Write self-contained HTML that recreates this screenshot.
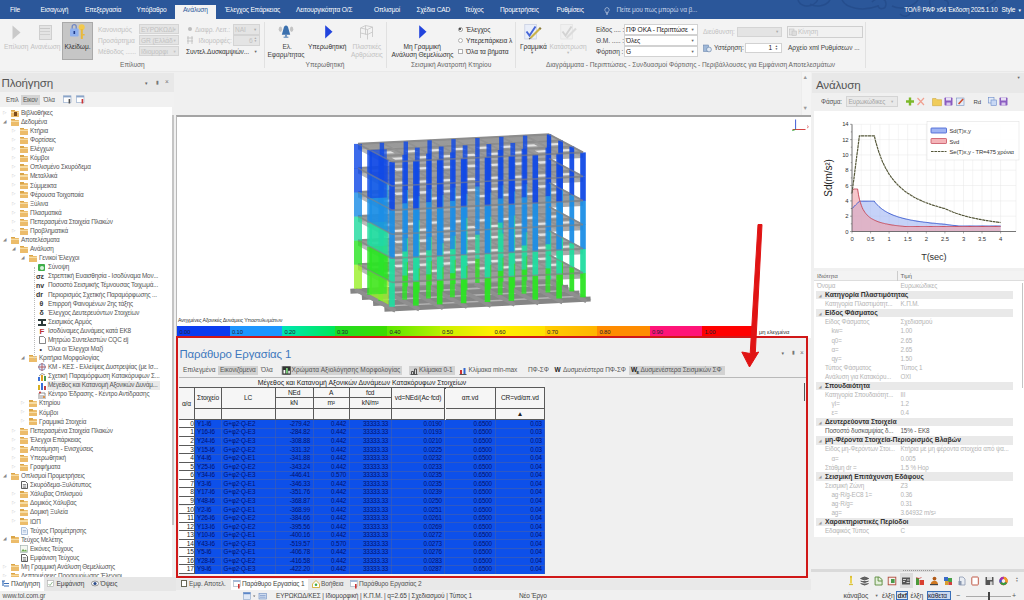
<!DOCTYPE html><html lang="el"><head><meta charset="utf-8"><title>ΤΟΛ ΡΑΦ</title><style>
*{box-sizing:border-box;margin:0;padding:0}
html,body{width:1024px;height:600px;overflow:hidden;background:#f0f0f0;font-family:"Liberation Sans","DejaVu Sans",sans-serif;font-size:6.6px;color:#444;letter-spacing:-.13px}
.a{position:absolute;white-space:nowrap}
.t{position:absolute;white-space:nowrap;line-height:1}
#top{left:0;top:0;width:1024px;height:19px;background:#2b579a}
#top .t{color:#fff;font-size:6.6px;top:7px;letter-spacing:-.16px}
#ribbon{left:0;top:19px;width:1024px;height:52.5px;background:#f3f3f3;border-bottom:1px solid #e9e9e9}
.dis{color:#c2c2c2 !important}
.rb{font-size:6.6px;color:#444;letter-spacing:-.08px}
.grp{font-size:6.6px;color:#666;letter-spacing:-.02px}
.sep{position:absolute;top:22px;width:1px;height:46px;background:#e1e1e1}
.combo{position:absolute;background:#fff;border:1px solid #d2d2d2;height:10.600px}
.combo.d{background:#e4e4e4;border-color:#d4d4d4}
.ptitle{font-size:11.6px;color:#555;letter-spacing:-0.15px}
</style></head><body><div id="top" class="a"><svg class="a" style="left:780px;top:0" width="244" height="19" viewBox="0 0 244 19"><g fill="none" stroke="#254d8c" stroke-width="1.500" opacity=".9"><path d="M18 0c2 6 10 8 16 4s4-10-2-8M30 4c6 4 16 2 20-4M62 0c4 8 20 12 36 6M92 2c6-6 14-4 14 2s-8 6-8 1M112 6c8 4 20 2 26-6M150 0c-2 6 4 12 12 10s8-10 2-10M172 8c10 6 30 4 44-8M200 6c4 6 14 8 22 2M120 14c4 4 10 2 10-2"/></g></svg><span class="t" style="left:10px">File</span><span class="t" style="left:40.5px">Εισαγωγή</span><span class="t" style="left:85px">Επεξεργασία</span><span class="t" style="left:136.5px">Υπόβαθρο</span><span class="t" style="left:225px">Έλεγχος Επάρκειας</span><span class="t" style="left:296px">Λειτουργικότητα Ο/Σ</span><span class="t" style="left:374px">Οπλισμοί</span><span class="t" style="left:416.5px">Σχέδια CAD</span><span class="t" style="left:464.5px">Τεύχος</span><span class="t" style="left:500px">Προμετρήσεις</span><span class="t" style="left:556.5px">Ρυθμίσεις</span><div class="a" style="left:174.800px;top:5px;width:41.200px;height:14px;background:#f3f3f3"></div><span class="t" style="left:183px;color:#2b579a">Ανάλυση</span><svg class="a" style="left:604px;top:6.5px" width="6" height="8" viewBox="0 0 6 8"><path d="M3 .6a2.2 2.2 0 0 1 1.2 4v1H1.8v-1A2.2 2.2 0 0 1 3 .6zM2 6.6h2M2.3 7.5h1.4" fill="none" stroke="#d5deee" stroke-width=".6"/></svg><span class="t" style="left:616.5px;color:#c5d2e8">Πείτε μου πως μπορώ να β...</span><span class="t" style="right:26.500px;font-size:6.400px;letter-spacing:-.2px">ΤΟΛ® ΡΑΦ x64 Έκδοση 2025.1.10</span><span class="t" style="left:1001.500px">Style</span><span class="t" style="left:1018.500px;font-size:5px;top:8px">▾</span></div><div id="ribbon" class="a"></div><div id="rb" class="a" style="left:0;top:0;width:1024px;height:72px"><svg class="a" style="left:12px;top:25px" width="9" height="15" viewBox="0 0 9 15"><path d="M.5.5l8 7-8 7z" fill="#c9c9c9"/></svg><span class="t rb dis" style="left:4px;top:44px">Επίλυση</span><div class="a" style="left:38.5px;top:24.5px;width:13px;height:15.5px;background:#e4e4e4;border:1px solid #cfcfcf"></div><div class="a" style="left:40px;top:28px;width:10px;height:1px;background:#c8c8c8;box-shadow:0 3px #d0d0d0,0 6px #d0d0d0"></div><span class="t rb dis" style="left:30.5px;top:44px">Ανανέωση</span><div class="a" style="left:62px;top:21.5px;width:31px;height:38px;background:#c6c6c6;border:1px solid #a9a9a9"></div><svg class="a" style="left:68px;top:23px" width="20" height="18" viewBox="0 0 20 18"><path d="M4.2 6V3.6a2 2 0 0 1 4 0V6" fill="none" stroke="#6f86c4" stroke-width="1.3"/><rect x="2" y="5.5" width="8.6" height="8" rx="1" fill="#8fb0ee"/><rect x="5.5" y="8" width="1.6" height="3" fill="#1f3a8a"/><circle cx="13.7" cy="4.2" r="3" fill="#f2c94c"/><rect x="12.8" y="6" width="2" height="10" fill="#e9b93a"/><rect x="14.6" y="11" width="2" height="1.5" fill="#e9b93a"/></svg><span class="t rb" style="left:64.5px;top:44px;color:#333">Κλείδωμ.</span><span class="t rb dis" style="left:98px;top:26.5px">Κανονισμός</span><div class="combo d" style="left:139px;top:23.9px;width:40px"></div><span class="t rb dis" style="left:141px;top:26.5px;color:#aaa">ΕΥΡΩΚΩΔΙ</span><span class="t dis" style="left:173.5px;top:27.5px;font-size:4.5px;color:#aaa">▾</span><span class="t rb dis" style="left:98px;top:37.5px">Προσάρτημα</span><div class="combo d" style="left:139px;top:34.9px;width:40px"></div><span class="t rb dis" style="left:141px;top:37.5px;color:#aaa">GR (Ελλάδ</span><span class="t dis" style="left:173.5px;top:38.5px;font-size:4.5px;color:#aaa">▾</span><span class="t rb dis" style="left:98px;top:48.5px">Μέθοδος ......</span><div class="combo d" style="left:139px;top:45.9px;width:40px"></div><span class="t rb dis" style="left:141px;top:48.5px;color:#aaa">Ιδιομορφι</span><span class="t dis" style="left:173.5px;top:49.5px;font-size:4.5px;color:#aaa">▾</span><div class="a" style="left:187.5px;top:27px;width:4px;height:4px;border-radius:2px;background:#bdbdbd"></div><span class="t rb dis" style="left:195px;top:26.5px">Διαφρ. Λειτ.:</span><div class="combo d" style="left:233px;top:24px;width:27px"></div><span class="t rb dis" style="left:235px;top:26.5px;color:#aaa">ΝΑΙ</span><span class="t" style="left:254px;top:27.5px;font-size:4.5px;color:#aaa">▾</span><svg class="a" style="left:186.5px;top:36px" width="6" height="8" viewBox="0 0 6 8"><path d="M1 0v8M5 0v8M0 2h6M0 5h6" stroke="#bbb" stroke-width=".8" fill="none"/></svg><span class="t rb dis" style="left:198.5px;top:37.5px">Ιδιομορφές:</span><div class="combo d" style="left:233px;top:35px;width:27px"></div><span class="t rb dis" style="left:249px;top:37.5px;color:#aaa">6</span><span class="t" style="left:254.5px;top:36.5px;font-size:3.6px;color:#aaa;line-height:3.4px">▴<br>▾</span><span class="t rb" style="left:186px;top:48.5px;color:#333">Συντελ.Δυσκαμψιών...</span><span class="t" style="left:254.5px;top:49.5px;font-size:4.5px;color:#666">▾</span><span class="t grp" style="left:120px;top:62px">Επίλυση</span><div class="sep" style="left:263.5px"></div><svg class="a" style="left:277px;top:24px" width="18" height="16" viewBox="0 0 18 16"><ellipse cx="3.400" cy="5.200" rx="1.700" ry="2.700" fill="#c4c4c4"/><ellipse cx="14.600" cy="5.200" rx="1.700" ry="2.700" fill="#c4c4c4"/><path d="M9 1.600c-1.300 0-2 1.100-2.500 3.200L4.800 10.800h8.400L11.500 4.800C11 2.700 10.300 1.600 9 1.600z" fill="#3b70ae"/><rect x="8.300" y="10.800" width="1.400" height="2" fill="#3b70ae"/><path d="M6.600 13.200h4.800" stroke="#3b70ae" stroke-width=".9"/></svg><span class="t rb" style="left:282.500px;top:43.500px;color:#444">Ελ.</span><span class="t rb" style="left:267.500px;top:51.500px;color:#444">Εφαρμ/τητας</span><svg class="a" style="left:324.800px;top:25.200px" width="8" height="14" viewBox="0 0 8 14"><path d="M.2.200l7.300 6.600-7.300 6.600z" fill="#2244dd"/></svg><span class="t rb" style="left:308px;top:43.500px;color:#333">Υπερωθητική</span><svg class="a" style="left:359px;top:24px" width="15" height="16" viewBox="0 0 15 16"><g fill="none" stroke="#c4c4c4" stroke-width=".8"><path d="M1.500 4l5-2.500 7 1.500-5 2.500zM1.500 4v10M8.500 5.500v10M13.500 3v10M6.500 1.500v9M1.500 9l7 1.500 5-2.500"/></g></svg><span class="t rb dis" style="left:352.500px;top:43.500px">Πλαστικές</span><span class="t rb dis" style="left:351px;top:51.500px">Αρθρώσεις</span><span class="t grp" style="left:305.500px;top:62px">Υπερωθητική</span><div class="sep" style="left:386px"></div><svg class="a" style="left:419.300px;top:25.200px" width="8" height="14" viewBox="0 0 8 14"><path d="M.2.200l7.300 6.600-7.300 6.600z" fill="#2244dd"/></svg><span class="t rb" style="left:403.500px;top:43.500px;color:#333">Μη Γραμμική</span><span class="t rb" style="left:391.500px;top:51.500px;color:#333">Ανάλυση Θεμελίωσης</span><div class="a" style="left:457.500px;top:26.500px;width:5px;height:5px;border-radius:3px;border:.6px solid #9a9a9a;background:#fff"></div><div class="a" style="left:459px;top:28px;width:2px;height:2px;border-radius:1px;background:#222"></div><span class="t rb" style="left:466px;top:26.500px;color:#333">Έλεγχος</span><div class="a" style="left:457.500px;top:37.500px;width:5px;height:5px;border-radius:3px;border:.6px solid #b0b0b0;background:#fff"></div><span class="t rb" style="left:466px;top:37.500px;color:#333">Υπερεπάρκεια λ</span><div class="a" style="left:457.500px;top:48.500px;width:5.500px;height:5.500px;border:.6px solid #b0b0b0;background:#fff"></div><span class="t rb" style="left:466px;top:48.500px;color:#333">Όλα τα βήματα</span><span class="t grp" style="left:411px;top:62px">Σεισμική Ανατροπή Κτηρίου</span><div class="sep" style="left:514.500px"></div><svg class="a" style="left:523px;top:23px" width="20" height="18" viewBox="0 0 20 18"><rect x="1.800" y="1.500" width="11.500" height="14.500" fill="#e9eef9" stroke="#c3cbe0" stroke-width=".7"/><path d="M3.500 8.500l3 4 6-9" fill="none" stroke="#4565d8" stroke-width="1.900"/><path d="M17 5.500L7.500 15" stroke="#c9b24a" stroke-width="2.200"/><path d="M17.800 4.700l-1.300 1.300" stroke="#8a7a3a" stroke-width="2.200"/><path d="M7.500 15l-1.500 1" stroke="#555" stroke-width="1.200"/></svg><span class="t rb" style="left:520px;top:43.500px;color:#333">Γραμμικά</span><span class="t" style="left:531px;top:51px;font-size:4.500px;color:#666">▾</span><svg class="a" style="left:559px;top:23px" width="20" height="18" viewBox="0 0 20 18" opacity=".5"><rect x="1.800" y="1.500" width="11.500" height="14.500" fill="#efefef" stroke="#cfcfcf" stroke-width=".7"/><path d="M3.500 8.500l3 4 6-9" fill="none" stroke="#b4b4b4" stroke-width="1.900"/><path d="M17 5.500L7.500 15" stroke="#c4c4c4" stroke-width="2.200"/></svg><span class="t rb dis" style="left:549.500px;top:43.500px">Κατάστρωση</span><span class="t" style="left:567px;top:51px;font-size:4.500px;color:#bbb">▾</span><span class="t rb" style="left:596px;top:26.5px;color:#444">Είδος .... :</span><div class="combo" style="left:624px;top:24.0px;width:73.500px;height:10.900px"></div><span class="t rb" style="left:626px;top:26.5px;color:#222">ΠΦ ΟΚΑ - Περιπτώσε</span><span class="t" style="left:691.500px;top:27.5px;font-size:4.500px;color:#666">▾</span><span class="t rb" style="left:596px;top:37.5px;color:#444">Θ.Μ. ..... :</span><div class="combo" style="left:624px;top:35.0px;width:73.500px;height:10.900px"></div><span class="t rb" style="left:626px;top:37.5px;color:#222">Όλες</span><span class="t" style="left:691.500px;top:38.5px;font-size:4.500px;color:#666">▾</span><span class="t rb" style="left:596px;top:48.5px;color:#444">Φόρτιση :</span><div class="combo" style="left:624px;top:46.0px;width:73.500px;height:10.900px"></div><span class="t rb" style="left:626px;top:48.5px;color:#222">G</span><span class="t" style="left:691.500px;top:49.5px;font-size:4.500px;color:#666">▾</span><span class="t rb dis" style="left:703px;top:29px">Διεύθυνση:</span><div class="combo d" style="left:736.500px;top:27px;width:45px;height:10px"></div><span class="t" style="left:776px;top:30px;font-size:4.500px;color:#aaa">▾</span><svg class="a" style="left:703px;top:43.500px" width="9" height="9" viewBox="0 0 9 9"><rect x=".5" y="1" width="5" height="6.500" fill="#9fb8d8" stroke="#5b7aa5" stroke-width=".5"/><circle cx="6" cy="5.500" r="2.400" fill="#dfe8f3" stroke="#5b7aa5" stroke-width=".6"/></svg><span class="t rb" style="left:714px;top:45px;color:#444">Υστέρηση:</span><div class="combo" style="left:744.500px;top:43px;width:37px;height:10px"></div><span class="t rb" style="left:768.500px;top:45px;color:#222">1</span><span class="t" style="left:775.500px;top:44.500px;font-size:3.600px;color:#555;line-height:3.400px">▴<br>▾</span><div class="a" style="left:786.500px;top:26px;width:76.500px;height:11.500px;border:1px solid #cfcfcf;background:#f1f1f1"></div><svg class="a" style="left:788.500px;top:28px" width="8" height="8" viewBox="0 0 8 8"><rect x=".5" y="1" width="4.500" height="6" fill="#e4e4e4" stroke="#bbb" stroke-width=".5"/><rect x="3" y="3" width="4.500" height="4.500" fill="#ddd" stroke="#bbb" stroke-width=".5"/></svg><span class="t rb dis" style="left:798px;top:29px">Κίνηση</span><span class="t rb" style="left:788px;top:45px;color:#444">Αρχείο xml Ρυθμίσεων ...</span><span class="t grp" style="left:546px;top:62px">Διαγράμματα - Περιπτώσεις - Συνδυασμοί Φόρτισης - Περιβάλλουσες για Εμφάνιση Αποτελεσμάτων</span><div class="sep" style="left:865px"></div></div><style>.tr{font-size:6.4px;color:#555;letter-spacing:-.2px}.fo{position:absolute;width:8px;height:6px;background:#ecbc6a;border-radius:.5px}.fo:before{content:"";position:absolute;left:0;top:-1px;width:4px;height:1.5px;background:#d9a548}.fo:after{content:"";position:absolute;left:0;top:1.2px;width:8px;height:1.2px;background:#f6dca4}.ex{position:absolute;font-size:4.5px;color:#a9a9a9;line-height:1}</style><div class="a" style="left:0;top:72px;width:176px;height:528px;background:#f0f0f0"></div><div class="a" style="left:0;top:72.5px;width:174px;height:19px;background:#e8e8e8"></div><span class="t ptitle" style="left:1.5px;top:77px">Πλοήγηση</span><span class="t" style="left:145px;top:81px;font-size:5px;color:#666">▾</span><span class="t" style="left:156px;top:79.5px;font-size:5px;color:#777">▮</span><span class="t" style="left:165px;top:79px;font-size:6.5px;color:#777">×</span><div class="a" style="left:0;top:91.5px;width:174px;height:15px;background:#f1f1f1"></div><div class="a" style="left:21px;top:95px;width:19px;height:10px;background:#d4d4d4"></div><span class="t tr" style="left:6px;top:96.500px">Επιλ</span><span class="t tr" style="left:23px;top:96.500px">Εικον</span><span class="t tr" style="left:43.500px;top:96.500px">Όλα</span><svg class="a" style="left:63px;top:95px" width="9" height="9" viewBox="0 0 9 9"><rect x=".4" y=".8" width="7.600" height="6.500" fill="#fff" stroke="#8aa4c8" stroke-width=".6"/><rect x=".4" y=".8" width="7.600" height="1.600" fill="#8aa4c8"/><rect x="5.600" y="4" width="1.600" height="4.500" fill="#555"/></svg><svg class="a" style="left:76px;top:95px" width="9" height="9" viewBox="0 0 9 9"><rect x=".4" y=".8" width="7.600" height="6.500" fill="#fff" stroke="#8aa4c8" stroke-width=".6"/><rect x=".4" y=".8" width="7.600" height="1.600" fill="#8aa4c8"/><rect x="5.600" y="4" width="1.600" height="4.500" fill="#c33"/></svg><div class="a" style="left:0;top:106.500px;width:172px;height:470.300px;background:#fff;overflow:hidden"><span class="ex" style="left:3px;top:4.200000000000003px;color:#c4c4c4">▷</span><div class="fo" style="left:11px;top:4.200000000000003px"></div><div class="a" style="left:13.5px;top:5.700000000000003px;width:3.500px;height:3.500px;background:#7a4a1c"></div><span class="t tr" style="left:21px;top:3.400000000000003px">Βιβλιοθήκες</span><span class="ex" style="left:3px;top:13.280000000000001px;color:#888">◢</span><div class="fo" style="left:11px;top:13.280000000000001px"></div><span class="t tr" style="left:21px;top:12.48px">Δεδομένα</span><span class="ex" style="left:12px;top:22.360000000000014px;color:#c4c4c4">▷</span><div class="fo" style="left:20px;top:22.360000000000014px"></div><span class="t tr" style="left:30px;top:21.560000000000013px">Κτήρια</span><span class="ex" style="left:12px;top:31.439999999999998px;color:#c4c4c4">▷</span><div class="fo" style="left:20px;top:31.439999999999998px"></div><span class="t tr" style="left:30px;top:30.639999999999997px">Φορτίσεις</span><span class="ex" style="left:12px;top:40.52000000000001px;color:#c4c4c4">▷</span><div class="fo" style="left:20px;top:40.52000000000001px"></div><span class="t tr" style="left:30px;top:39.72000000000001px">Ελέγχων</span><span class="ex" style="left:12px;top:49.599999999999994px;color:#c4c4c4">▷</span><div class="fo" style="left:20px;top:49.599999999999994px"></div><span class="t tr" style="left:30px;top:48.8px">Κόμβοι</span><span class="ex" style="left:12px;top:58.68000000000001px;color:#c4c4c4">▷</span><div class="fo" style="left:20px;top:58.68000000000001px"></div><span class="t tr" style="left:30px;top:57.88000000000001px">Οπλισμένο Σκυρόδεμα</span><span class="ex" style="left:12px;top:67.75999999999999px;color:#c4c4c4">▷</span><div class="fo" style="left:20px;top:67.75999999999999px"></div><span class="t tr" style="left:30px;top:66.96px">Μεταλλικά</span><span class="ex" style="left:12px;top:76.84px;color:#c4c4c4">▷</span><div class="fo" style="left:20px;top:76.84px"></div><span class="t tr" style="left:30px;top:76.04px">Σύμμεικτα</span><span class="ex" style="left:12px;top:85.92000000000002px;color:#c4c4c4">▷</span><div class="fo" style="left:20px;top:85.92000000000002px"></div><span class="t tr" style="left:30px;top:85.12000000000002px">Φέρουσα Τοιχοποιία</span><span class="ex" style="left:12px;top:95.0px;color:#c4c4c4">▷</span><div class="fo" style="left:20px;top:95.0px"></div><span class="t tr" style="left:30px;top:94.2px">Ξύλινα</span><span class="ex" style="left:12px;top:104.07999999999998px;color:#c4c4c4">▷</span><div class="fo" style="left:20px;top:104.07999999999998px"></div><span class="t tr" style="left:30px;top:103.27999999999999px">Πλασματικά</span><span class="ex" style="left:12px;top:113.16000000000003px;color:#c4c4c4">▷</span><div class="fo" style="left:20px;top:113.16000000000003px"></div><span class="t tr" style="left:30px;top:112.36000000000003px">Πεπερασμένα Στοιχεία Πλακών</span><span class="ex" style="left:12px;top:122.24000000000001px;color:#c4c4c4">▷</span><div class="fo" style="left:20px;top:122.24000000000001px"></div><span class="t tr" style="left:30px;top:121.44000000000001px">Προβληματικά</span><span class="ex" style="left:3px;top:131.32px;color:#888">◢</span><div class="fo" style="left:11px;top:131.32px"></div><span class="t tr" style="left:21px;top:130.51999999999998px">Αποτελέσματα</span><span class="ex" style="left:12px;top:140.39999999999998px;color:#888">◢</span><div class="fo" style="left:20px;top:140.39999999999998px"></div><span class="t tr" style="left:30px;top:139.59999999999997px">Ανάλυση</span><span class="ex" style="left:21px;top:149.48000000000002px;color:#888">◢</span><div class="fo" style="left:29px;top:149.48000000000002px"></div><span class="t tr" style="left:39px;top:148.68px">Γενικοί Έλεγχοι</span><div class="a" style="left:38px;top:157.56px;width:7px;height:7px;background:#3fae49;border-radius:1px"></div><div class="a" style="left:39.5px;top:159.06px;width:4px;height:4px;background:#d9f2db;border-radius:2px"></div><span class="t tr" style="left:48px;top:157.76px">Σύνοψη</span><span class="t" style="left:36px;top:166.64px;font-size:7px;font-weight:bold;color:#333">σε</span><span class="t tr" style="left:48px;top:166.83999999999997px">Στρεπτική Ευαισθησία - Ισοδύναμα Μον...</span><span class="t" style="left:36px;top:175.72000000000003px;font-size:7px;font-weight:bold;color:#333">nv</span><span class="t tr" style="left:48px;top:175.92000000000002px">Ποσοστό Σεισμικής Τέμνουσας Τοιχωμά...</span><span class="t" style="left:36px;top:184.8px;font-size:7px;font-weight:bold;color:#333">dr</span><span class="t tr" style="left:48px;top:185.0px">Περιορισμός Σχετικής Παραμόρφωσης ...</span><span class="t" style="left:39.5px;top:193.88px;font-size:7px;font-weight:bold;color:#333">θ</span><span class="t tr" style="left:48px;top:194.07999999999998px">Επιρροή Φαινομένων 2ης τάξης</span><span class="t" style="left:39.5px;top:202.95999999999998px;font-size:7px;font-weight:bold;color:#333">δ</span><span class="t tr" style="left:48px;top:203.15999999999997px">Έλεγχος Δευτερευόντων Στοιχείων</span><svg class="a" style="left:38px;top:212.04000000000002px" width="8" height="7" viewBox="0 0 8 7"><path d="M0 0h8v2H5v3h3v2H0V5h3V2H0z" fill="#2c3a3a"/></svg><span class="t tr" style="left:48px;top:212.24px">Σεισμικός Αρμός</span><span class="t" style="left:39.5px;top:221.12px;font-size:8px;font-weight:bold;color:#b33">F</span><span class="t tr" style="left:48px;top:221.32px">Ισοδύναμες Δυνάμεις κατά ΕΚ8</span><svg class="a" style="left:38.5px;top:229.7px" width="7" height="8" viewBox="0 0 7 8"><path d="M.5.500h4l2 2v5h-6z" fill="#fff" stroke="#555" stroke-width=".7"/></svg><span class="t tr" style="left:48px;top:230.39999999999998px">Μητρώο Συντελεστών CQC εij</span><span class="t" style="left:39.5px;top:239.28000000000003px;font-size:7px;font-weight:bold;color:#333">•</span><span class="t tr" style="left:48px;top:239.48000000000002px">Όλοι οι Έλεγχοι Μαζί</span><span class="ex" style="left:21px;top:249.36px;color:#888">◢</span><div class="fo" style="left:29px;top:249.36px"></div><span class="t tr" style="left:39px;top:248.56px">Κριτήρια Μορφολογίας</span><svg class="a" style="left:38px;top:256.94px" width="8" height="8" viewBox="0 0 8 8"><circle cx="4" cy="4" r="3.300" fill="#dfe7f5" stroke="#5a6ea8" stroke-width=".7"/><path d="M4 0v8M0 4h8" stroke="#a33" stroke-width=".7"/></svg><span class="t tr" style="left:48px;top:257.64px">ΚΜ - ΚΕΣ - Ελλείψεις Δυστρεψίας (με Ισ...</span><svg class="a" style="left:38px;top:266.02px" width="8" height="8" viewBox="0 0 8 8"><rect x="0" y="4" width="2" height="4" fill="#3a6fd8"/><rect x="3" y="2" width="2" height="6" fill="#e0a020"/><rect x="6" y="3" width="2" height="5" fill="#4a9a4a"/><path d="M1 3l3-2.500 3 1.500" stroke="#555" stroke-width=".6" fill="none"/></svg><span class="t tr" style="left:48px;top:266.71999999999997px">Σχετική Παραμόρφωση Κατακόρυφων Σ...</span><div class="a" style="left:46.5px;top:274.59999999999997px;width:113px;height:9px;background:#e9e9e9"></div><svg class="a" style="left:38px;top:275.09999999999997px" width="8" height="8" viewBox="0 0 8 8"><rect x="0" y="3" width="2" height="5" fill="#d8b020"/><rect x="3" y="1" width="2" height="7" fill="#3a6fd8"/><rect x="6" y="4" width="2" height="4" fill="#c04040"/></svg><span class="t tr" style="left:48px;top:275.79999999999995px">Μέγεθος και Κατανομή Αξονικών Δυνάμ...</span><svg class="a" style="left:38px;top:284.18px" width="8" height="8" viewBox="0 0 8 8"><path d="M1 8V2h6v6M3 8V4M5 8V4" stroke="#777" stroke-width=".8" fill="none"/><circle cx="2" cy="1.500" r="1" fill="#c33"/><circle cx="6" cy="6" r="1" fill="#e08020"/></svg><span class="t tr" style="left:48px;top:284.88px">Κέντρο Έδρασης - Κέντρο Αντίδρασης</span><span class="ex" style="left:21px;top:294.76px;color:#c4c4c4">▷</span><div class="fo" style="left:29px;top:294.76px"></div><span class="t tr" style="left:39px;top:293.96px">Κτηρίου</span><span class="ex" style="left:21px;top:303.84px;color:#c4c4c4">▷</span><div class="fo" style="left:29px;top:303.84px"></div><span class="t tr" style="left:39px;top:303.03999999999996px">Κόμβοι</span><span class="ex" style="left:21px;top:312.92px;color:#c4c4c4">▷</span><div class="fo" style="left:29px;top:312.92px"></div><span class="t tr" style="left:39px;top:312.12px">Γραμμικά Στοιχεία</span><span class="ex" style="left:12px;top:322.0px;color:#c4c4c4">▷</span><div class="fo" style="left:20px;top:322.0px"></div><span class="t tr" style="left:30px;top:321.2px">Πεπερασμένα Στοιχεία Πλακών</span><span class="ex" style="left:12px;top:331.08px;color:#c4c4c4">▷</span><div class="fo" style="left:20px;top:331.08px"></div><span class="t tr" style="left:30px;top:330.28px">Έλεγχοι Επάρκειας</span><span class="ex" style="left:12px;top:340.15999999999997px;color:#c4c4c4">▷</span><div class="fo" style="left:20px;top:340.15999999999997px"></div><span class="t tr" style="left:30px;top:339.35999999999996px">Αποτίμηση - Ενισχύσεις</span><span class="ex" style="left:12px;top:349.24px;color:#c4c4c4">▷</span><div class="fo" style="left:20px;top:349.24px"></div><span class="t tr" style="left:30px;top:348.44px">Υπερωθητική</span><span class="ex" style="left:12px;top:358.32px;color:#c4c4c4">▷</span><div class="fo" style="left:20px;top:358.32px"></div><span class="t tr" style="left:30px;top:357.52px">Γραφήματα</span><span class="ex" style="left:3px;top:367.4px;color:#888">◢</span><div class="fo" style="left:11px;top:367.4px"></div><span class="t tr" style="left:21px;top:366.59999999999997px">Οπλισμοί Προμετρήσεις</span><svg class="a" style="left:20.5px;top:374.98px" width="7" height="8" viewBox="0 0 7 8"><path d="M.5.500h4l2 2v5h-6z" fill="#fff" stroke="#333" stroke-width=".8"/><path d="M1.800 3.500h3.400M1.800 5h3.400M1.800 6.300h3.400" stroke="#444" stroke-width=".6"/></svg><span class="t tr" style="left:30px;top:375.68px">Σκυρόδεμα-Ξυλότυπος</span><span class="ex" style="left:12px;top:385.56px;color:#c4c4c4">▷</span><div class="fo" style="left:20px;top:385.56px"></div><span class="t tr" style="left:30px;top:384.76px">Χάλυβας Οπλισμού</span><span class="ex" style="left:12px;top:394.64px;color:#c4c4c4">▷</span><div class="fo" style="left:20px;top:394.64px"></div><span class="t tr" style="left:30px;top:393.84px">Δομικός Χάλυβας</span><span class="ex" style="left:12px;top:403.72px;color:#c4c4c4">▷</span><div class="fo" style="left:20px;top:403.72px"></div><span class="t tr" style="left:30px;top:402.92px">Δομική Ξυλεία</span><span class="ex" style="left:12px;top:412.80000000000007px;color:#c4c4c4">▷</span><div class="fo" style="left:20px;top:412.80000000000007px"></div><span class="t tr" style="left:30px;top:412.00000000000006px">ΙΩΠ</span><svg class="a" style="left:20.5px;top:420.38px" width="7" height="8" viewBox="0 0 7 8"><path d="M.5.500h4l2 2v5h-6z" fill="#eef3fb" stroke="#8aa4c8" stroke-width=".7"/><path d="M1.800 3.500h3.400M1.800 5h3.400" stroke="#8aa4c8" stroke-width=".6"/></svg><span class="t tr" style="left:30px;top:421.08px">Τεύχος Προμέτρησης</span><span class="ex" style="left:3px;top:430.96000000000004px;color:#888">◢</span><div class="fo" style="left:11px;top:430.96000000000004px"></div><span class="t tr" style="left:21px;top:430.16px">Τεύχος Μελέτης</span><svg class="a" style="left:20px;top:438.5400000000001px" width="8" height="8" viewBox="0 0 8 8"><rect x=".4" y=".4" width="7.200" height="7.200" fill="#f4f8f2" stroke="#9aa" stroke-width=".6"/><path d="M1 6.500l2-2.500 1.500 1.500 1.500-1 1 2z" fill="#6aa84f"/></svg><span class="t tr" style="left:30px;top:439.24000000000007px">Εικόνες Τεύχους</span><svg class="a" style="left:20.5px;top:447.62px" width="7" height="8" viewBox="0 0 7 8"><path d="M.5.500h4l2 2v5h-6z" fill="#fff" stroke="#333" stroke-width=".8"/><path d="M1.800 3.500h3.400M1.800 5h3.400M1.800 6.300h3.400" stroke="#444" stroke-width=".6"/></svg><span class="t tr" style="left:30px;top:448.32px">Εμφάνιση Τεύχους</span><span class="ex" style="left:3px;top:458.20000000000005px;color:#c4c4c4">▷</span><div class="fo" style="left:11px;top:458.20000000000005px"></div><span class="t tr" style="left:21px;top:457.40000000000003px">Μη Γραμμική Ανάλυση Θεμελίωσης</span><span class="ex" style="left:3px;top:467.28px;color:#c4c4c4">▷</span><div class="fo" style="left:11px;top:467.28px"></div><span class="t tr" style="left:21px;top:466.47999999999996px">Λεπτομέρειες Προσομοίωσης Έλεγχοι</span><div class="a" style="left:33.500px;top:160px;width:0;height:92px;border-left:.6px dotted #bbb"></div></div><div class="a" style="left:172px;top:106.500px;width:4px;height:471.500px;background:#f0f0f0"></div><div class="a" style="left:172.300px;top:115px;width:1.600px;height:410px;background:#c4c4c4"></div><div class="a" style="left:0;top:577px;width:176px;height:14px;background:#e6e6e6"></div><div class="a" style="left:0;top:577px;width:43.500px;height:14px;background:#fff"></div><svg class="a" style="left:2px;top:579.500px" width="8" height="8" viewBox="0 0 8 8"><path d="M0 1h3M2 3.500h5M2 6h5M1 1v5" stroke="#3a6fb8" stroke-width="1.200" fill="none"/></svg><span class="t" style="left:11px;top:580.500px;font-size:6.600px;color:#444">Πλοήγηση</span><svg class="a" style="left:47px;top:580px" width="7" height="7" viewBox="0 0 7 7"><rect x=".4" y=".4" width="6.200" height="6.200" fill="#fff" stroke="#aaa" stroke-width=".6"/><path d="M1.500 4l1.500 1.500 2.500-3.500" stroke="#7a7" stroke-width=".8" fill="none"/></svg><span class="t" style="left:56.500px;top:580.500px;font-size:6.600px;color:#444">Εμφάνιση</span><svg class="a" style="left:90.500px;top:580px" width="8" height="7" viewBox="0 0 8 7"><ellipse cx="4" cy="3.500" rx="3.600" ry="2.400" fill="#fff" stroke="#555" stroke-width=".6"/><circle cx="4" cy="3.500" r="1.600" fill="#2a4a8a"/></svg><span class="t" style="left:100.500px;top:580.500px;font-size:6.600px;color:#444">Όψεις</span><span class="t" style="left:2.500px;top:592.500px;font-size:6.600px;color:#555">www.tol.com.gr</span><div class="a" style="left:176px;top:114.800px;width:634.500px;height:223px;background:#fff;border-top:2px solid #a4a4a4;border-left:1px solid #b8b8b8"></div><div class="a" style="left:800.500px;top:72px;width:10px;height:43px;background:#f4f4f4;border-left:1px solid #ececec"></div><span class="t" style="left:802.500px;top:74.500px;font-size:5.500px;color:#9a9a9a">▲</span><span class="t" style="left:802.500px;top:105.500px;font-size:5.500px;color:#9a9a9a">▼</span><svg class="a" style="left:790px;top:115.500px" width="22" height="20" viewBox="0 0 22 20"><path d="M5.600 3.500v10" stroke="#2a4ad0" stroke-width=".9"/><path d="M2.500 13.500h13" stroke="#d03030" stroke-width=".9"/><path d="M2.300 14.600l3.300-1.100" stroke="#30a030" stroke-width=".9"/><path d="M17 9.500l1.500 1.300-1.500 1.300" stroke="#d03030" stroke-width=".6" fill="none"/></svg><svg class="a" style="left:0;top:0;filter:blur(.4px)" width="1024" height="600" viewBox="0 0 1024 600"><path d="M389.0 309.4L591.5 299.4L552.7 278.8L350.2 288.9z" fill="#9a9a9a" opacity="0.75"/><path d="M350.4 291.3L556.6 281.0" stroke="#858585" stroke-width="5" opacity="1"/><path d="M361.9 297.4L568.2 287.2" stroke="#858585" stroke-width="5" opacity="1"/><path d="M373.1 303.4L579.4 293.1" stroke="#858585" stroke-width="5" opacity="1"/><path d="M384.4 309.3L590.6 299.0" stroke="#858585" stroke-width="5" opacity="1"/><path d="M395.4 310.7L355.3 289.5" stroke="#8f8f8f" stroke-width="4" opacity="1"/><path d="M419.3 309.5L379.2 288.3" stroke="#8f8f8f" stroke-width="4" opacity="1"/><path d="M443.1 308.3L403.0 287.1" stroke="#8f8f8f" stroke-width="4" opacity="1"/><path d="M467.0 307.1L426.9 285.9" stroke="#8f8f8f" stroke-width="4" opacity="1"/><path d="M490.9 306.0L450.8 284.7" stroke="#8f8f8f" stroke-width="4" opacity="1"/><path d="M514.8 304.8L474.7 283.5" stroke="#8f8f8f" stroke-width="4" opacity="1"/><path d="M538.6 303.6L498.5 282.3" stroke="#8f8f8f" stroke-width="4" opacity="1"/><path d="M562.5 302.4L522.4 281.2" stroke="#8f8f8f" stroke-width="4" opacity="1"/><path d="M586.4 301.2L546.3 280.0" stroke="#8f8f8f" stroke-width="4" opacity="1"/><path d="M392.0 282.4L583.0 272.9L549.0 254.9L358.0 264.4z" fill="#9a9a9a" opacity="0.45"/><path d="M392.0 282.4L583.0 272.9" stroke="#9a9a9a" stroke-width="0.6" opacity="0.8"/><path d="M390.6 281.6L581.6 272.1" stroke="#9a9a9a" stroke-width="0.6" opacity="0.8"/><path d="M389.2 280.9L580.2 271.4" stroke="#9a9a9a" stroke-width="0.6" opacity="0.8"/><path d="M387.8 280.1L578.8 270.6" stroke="#9a9a9a" stroke-width="0.6" opacity="0.8"/><path d="M386.3 279.4L577.3 269.9" stroke="#9a9a9a" stroke-width="0.6" opacity="0.8"/><path d="M384.9 278.6L575.9 269.1" stroke="#9a9a9a" stroke-width="0.6" opacity="0.8"/><path d="M383.5 277.9L574.5 268.4" stroke="#9a9a9a" stroke-width="0.6" opacity="0.8"/><path d="M382.1 277.1L573.1 267.6" stroke="#9a9a9a" stroke-width="0.6" opacity="0.8"/><path d="M380.7 276.4L571.7 266.9" stroke="#9a9a9a" stroke-width="0.6" opacity="0.8"/><path d="M379.2 275.6L570.2 266.1" stroke="#9a9a9a" stroke-width="0.6" opacity="0.8"/><path d="M377.8 274.9L568.8 265.4" stroke="#9a9a9a" stroke-width="0.6" opacity="0.8"/><path d="M376.4 274.1L567.4 264.6" stroke="#9a9a9a" stroke-width="0.6" opacity="0.8"/><path d="M375.0 273.4L566.0 263.9" stroke="#9a9a9a" stroke-width="0.6" opacity="0.8"/><path d="M373.6 272.6L564.6 263.1" stroke="#9a9a9a" stroke-width="0.6" opacity="0.8"/><path d="M372.2 271.9L563.2 262.4" stroke="#9a9a9a" stroke-width="0.6" opacity="0.8"/><path d="M370.8 271.1L561.8 261.6" stroke="#9a9a9a" stroke-width="0.6" opacity="0.8"/><path d="M369.3 270.4L560.3 260.9" stroke="#9a9a9a" stroke-width="0.6" opacity="0.8"/><path d="M367.9 269.6L558.9 260.1" stroke="#9a9a9a" stroke-width="0.6" opacity="0.8"/><path d="M366.5 268.9L557.5 259.4" stroke="#9a9a9a" stroke-width="0.6" opacity="0.8"/><path d="M365.1 268.1L556.1 258.6" stroke="#9a9a9a" stroke-width="0.6" opacity="0.8"/><path d="M363.7 267.4L554.7 257.9" stroke="#9a9a9a" stroke-width="0.6" opacity="0.8"/><path d="M362.2 266.6L553.2 257.1" stroke="#9a9a9a" stroke-width="0.6" opacity="0.8"/><path d="M360.8 265.9L551.8 256.4" stroke="#9a9a9a" stroke-width="0.6" opacity="0.8"/><path d="M359.4 265.1L550.4 255.7" stroke="#9a9a9a" stroke-width="0.6" opacity="0.8"/><path d="M358.0 264.4L549.0 254.9" stroke="#9a9a9a" stroke-width="0.6" opacity="0.8"/><path d="M358.0 264.4L549.0 254.9L549.0 260.4L358.0 269.9z" fill="#949494" opacity="0.8"/><path d="M369.6 270.5L560.6 261.0L560.6 266.5L369.6 276.0z" fill="#949494" opacity="0.8"/><path d="M380.8 276.5L571.8 267.0L571.8 272.5L380.8 282.0z" fill="#949494" opacity="0.8"/><path d="M392.0 282.4L583.0 272.9L583.0 278.4L392.0 287.9z" fill="#949494" opacity="0.8"/><path d="M583.0 272.9L549.0 254.9L549.0 260.4L583.0 278.4z" fill="#9c9c9c" opacity="0.7"/><path d="M559.1 274.1L525.1 256.1L525.1 261.6L559.1 279.6z" fill="#9c9c9c" opacity="0.7"/><path d="M535.2 275.3L501.2 257.3L501.2 262.8L535.2 280.8z" fill="#9c9c9c" opacity="0.7"/><path d="M511.4 276.5L477.4 258.5L477.4 264.0L511.4 282.0z" fill="#9c9c9c" opacity="0.7"/><path d="M487.5 277.6L453.5 259.6L453.5 265.1L487.5 283.1z" fill="#9c9c9c" opacity="0.7"/><path d="M463.6 278.8L429.6 260.8L429.6 266.3L463.6 284.3z" fill="#9c9c9c" opacity="0.7"/><path d="M439.8 280.0L405.8 262.0L405.8 267.5L439.8 285.5z" fill="#9c9c9c" opacity="0.7"/><path d="M415.9 281.2L381.9 263.2L381.9 268.7L415.9 286.7z" fill="#9c9c9c" opacity="0.7"/><path d="M392.0 282.4L358.0 264.4L358.0 269.9L392.0 287.9z" fill="#9c9c9c" opacity="0.7"/><path d="M392.0 282.4L583.0 272.9" stroke="#8c8c8c" stroke-width="2.2" opacity="1"/><path d="M380.8 276.5L571.8 267.0" stroke="#8c8c8c" stroke-width="2.2" opacity="1"/><path d="M369.6 270.5L560.6 261.0" stroke="#8c8c8c" stroke-width="2.2" opacity="1"/><path d="M358.0 264.4L549.0 254.9" stroke="#8c8c8c" stroke-width="2.2" opacity="1"/><path d="M392.0 282.4L358.0 264.4" stroke="#929292" stroke-width="1.8" opacity="1"/><path d="M415.9 281.2L381.9 263.2" stroke="#929292" stroke-width="1.8" opacity="1"/><path d="M439.8 280.0L405.8 262.0" stroke="#929292" stroke-width="1.8" opacity="1"/><path d="M463.6 278.8L429.6 260.8" stroke="#929292" stroke-width="1.8" opacity="1"/><path d="M487.5 277.6L453.5 259.6" stroke="#929292" stroke-width="1.8" opacity="1"/><path d="M511.4 276.5L477.4 258.5" stroke="#929292" stroke-width="1.8" opacity="1"/><path d="M535.2 275.3L501.2 257.3" stroke="#929292" stroke-width="1.8" opacity="1"/><path d="M559.1 274.1L525.1 256.1" stroke="#929292" stroke-width="1.8" opacity="1"/><path d="M583.0 272.9L549.0 254.9" stroke="#929292" stroke-width="1.8" opacity="1"/><path d="M384.1 274.3L394.6 273.8L390.8 271.8L380.3 272.3z" fill="#fff" opacity="0.72"/><path d="M372.8 268.4L383.4 267.9L379.3 265.7L368.8 266.2z" fill="#fff" opacity="0.72"/><path d="M407.9 273.1L418.4 272.6L414.7 270.6L404.2 271.2z" fill="#fff" opacity="0.72"/><path d="M396.7 267.2L407.2 266.7L403.1 264.5L392.6 265.0z" fill="#fff" opacity="0.72"/><path d="M431.8 272.0L442.3 271.4L438.6 269.4L428.1 270.0z" fill="#fff" opacity="0.72"/><path d="M420.6 266.0L431.1 265.5L427.0 263.3L416.5 263.9z" fill="#fff" opacity="0.72"/><path d="M455.7 270.8L466.2 270.2L462.5 268.3L451.9 268.8z" fill="#fff" opacity="0.72"/><path d="M444.5 264.8L455.0 264.3L450.9 262.1L440.4 262.7z" fill="#fff" opacity="0.72"/><path d="M479.6 269.6L490.1 269.1L486.3 267.1L475.8 267.6z" fill="#fff" opacity="0.72"/><path d="M468.3 263.6L478.9 263.1L474.8 261.0L464.3 261.5z" fill="#fff" opacity="0.72"/><path d="M503.4 268.4L513.9 267.9L510.2 265.9L499.7 266.4z" fill="#fff" opacity="0.72"/><path d="M492.2 262.4L502.7 261.9L498.6 259.8L488.1 260.3z" fill="#fff" opacity="0.72"/><path d="M527.3 267.2L537.8 266.7L534.1 264.7L523.6 265.2z" fill="#fff" opacity="0.72"/><path d="M516.1 261.3L526.6 260.7L522.5 258.6L512.0 259.1z" fill="#fff" opacity="0.72"/><path d="M551.2 266.0L561.7 265.5L558.0 263.5L547.4 264.0z" fill="#fff" opacity="0.72"/><path d="M540.0 260.1L550.5 259.6L546.4 257.4L535.9 257.9z" fill="#fff" opacity="0.72"/><path d="M392.0 258.3L583.0 248.8L549.0 230.8L358.0 240.3z" fill="#9a9a9a" opacity="0.45"/><path d="M392.0 258.3L583.0 248.8" stroke="#9a9a9a" stroke-width="0.6" opacity="0.8"/><path d="M390.6 257.6L581.6 248.1" stroke="#9a9a9a" stroke-width="0.6" opacity="0.8"/><path d="M389.2 256.8L580.2 247.3" stroke="#9a9a9a" stroke-width="0.6" opacity="0.8"/><path d="M387.8 256.1L578.8 246.6" stroke="#9a9a9a" stroke-width="0.6" opacity="0.8"/><path d="M386.3 255.3L577.3 245.8" stroke="#9a9a9a" stroke-width="0.6" opacity="0.8"/><path d="M384.9 254.6L575.9 245.1" stroke="#9a9a9a" stroke-width="0.6" opacity="0.8"/><path d="M383.5 253.8L574.5 244.3" stroke="#9a9a9a" stroke-width="0.6" opacity="0.8"/><path d="M382.1 253.1L573.1 243.6" stroke="#9a9a9a" stroke-width="0.6" opacity="0.8"/><path d="M380.7 252.3L571.7 242.8" stroke="#9a9a9a" stroke-width="0.6" opacity="0.8"/><path d="M379.2 251.6L570.2 242.1" stroke="#9a9a9a" stroke-width="0.6" opacity="0.8"/><path d="M377.8 250.8L568.8 241.3" stroke="#9a9a9a" stroke-width="0.6" opacity="0.8"/><path d="M376.4 250.1L567.4 240.6" stroke="#9a9a9a" stroke-width="0.6" opacity="0.8"/><path d="M375.0 249.3L566.0 239.8" stroke="#9a9a9a" stroke-width="0.6" opacity="0.8"/><path d="M373.6 248.6L564.6 239.1" stroke="#9a9a9a" stroke-width="0.6" opacity="0.8"/><path d="M372.2 247.8L563.2 238.3" stroke="#9a9a9a" stroke-width="0.6" opacity="0.8"/><path d="M370.8 247.1L561.8 237.6" stroke="#9a9a9a" stroke-width="0.6" opacity="0.8"/><path d="M369.3 246.3L560.3 236.8" stroke="#9a9a9a" stroke-width="0.6" opacity="0.8"/><path d="M367.9 245.6L558.9 236.1" stroke="#9a9a9a" stroke-width="0.6" opacity="0.8"/><path d="M366.5 244.8L557.5 235.3" stroke="#9a9a9a" stroke-width="0.6" opacity="0.8"/><path d="M365.1 244.1L556.1 234.6" stroke="#9a9a9a" stroke-width="0.6" opacity="0.8"/><path d="M363.7 243.3L554.7 233.8" stroke="#9a9a9a" stroke-width="0.6" opacity="0.8"/><path d="M362.2 242.6L553.2 233.1" stroke="#9a9a9a" stroke-width="0.6" opacity="0.8"/><path d="M360.8 241.8L551.8 232.3" stroke="#9a9a9a" stroke-width="0.6" opacity="0.8"/><path d="M359.4 241.1L550.4 231.6" stroke="#9a9a9a" stroke-width="0.6" opacity="0.8"/><path d="M358.0 240.3L549.0 230.8" stroke="#9a9a9a" stroke-width="0.6" opacity="0.8"/><path d="M358.0 240.3L549.0 230.8L549.0 236.3L358.0 245.8z" fill="#949494" opacity="0.8"/><path d="M369.6 246.4L560.6 236.9L560.6 242.4L369.6 251.9z" fill="#949494" opacity="0.8"/><path d="M380.8 252.4L571.8 242.9L571.8 248.4L380.8 257.9z" fill="#949494" opacity="0.8"/><path d="M392.0 258.3L583.0 248.8L583.0 254.3L392.0 263.8z" fill="#949494" opacity="0.8"/><path d="M583.0 248.8L549.0 230.8L549.0 236.3L583.0 254.3z" fill="#9c9c9c" opacity="0.7"/><path d="M559.1 250.0L525.1 232.0L525.1 237.5L559.1 255.5z" fill="#9c9c9c" opacity="0.7"/><path d="M535.2 251.2L501.2 233.2L501.2 238.7L535.2 256.7z" fill="#9c9c9c" opacity="0.7"/><path d="M511.4 252.4L477.4 234.4L477.4 239.9L511.4 257.9z" fill="#9c9c9c" opacity="0.7"/><path d="M487.5 253.6L453.5 235.6L453.5 241.1L487.5 259.1z" fill="#9c9c9c" opacity="0.7"/><path d="M463.6 254.7L429.6 236.7L429.6 242.2L463.6 260.2z" fill="#9c9c9c" opacity="0.7"/><path d="M439.8 255.9L405.8 237.9L405.8 243.4L439.8 261.4z" fill="#9c9c9c" opacity="0.7"/><path d="M415.9 257.1L381.9 239.1L381.9 244.6L415.9 262.6z" fill="#9c9c9c" opacity="0.7"/><path d="M392.0 258.3L358.0 240.3L358.0 245.8L392.0 263.8z" fill="#9c9c9c" opacity="0.7"/><path d="M392.0 258.3L583.0 248.8" stroke="#8c8c8c" stroke-width="2.2" opacity="1"/><path d="M380.8 252.4L571.8 242.9" stroke="#8c8c8c" stroke-width="2.2" opacity="1"/><path d="M369.6 246.4L560.6 236.9" stroke="#8c8c8c" stroke-width="2.2" opacity="1"/><path d="M358.0 240.3L549.0 230.8" stroke="#8c8c8c" stroke-width="2.2" opacity="1"/><path d="M392.0 258.3L358.0 240.3" stroke="#929292" stroke-width="1.8" opacity="1"/><path d="M415.9 257.1L381.9 239.1" stroke="#929292" stroke-width="1.8" opacity="1"/><path d="M439.8 255.9L405.8 237.9" stroke="#929292" stroke-width="1.8" opacity="1"/><path d="M463.6 254.7L429.6 236.7" stroke="#929292" stroke-width="1.8" opacity="1"/><path d="M487.5 253.6L453.5 235.6" stroke="#929292" stroke-width="1.8" opacity="1"/><path d="M511.4 252.4L477.4 234.4" stroke="#929292" stroke-width="1.8" opacity="1"/><path d="M535.2 251.2L501.2 233.2" stroke="#929292" stroke-width="1.8" opacity="1"/><path d="M559.1 250.0L525.1 232.0" stroke="#929292" stroke-width="1.8" opacity="1"/><path d="M583.0 248.8L549.0 230.8" stroke="#929292" stroke-width="1.8" opacity="1"/><path d="M395.3 256.2L405.8 255.6L402.1 253.7L391.5 254.2z" fill="#fff" opacity="0.72"/><path d="M372.8 244.3L383.4 243.8L379.3 241.6L368.8 242.1z" fill="#fff" opacity="0.72"/><path d="M419.2 255.0L429.7 254.5L425.9 252.5L415.4 253.0z" fill="#fff" opacity="0.72"/><path d="M396.7 243.1L407.2 242.6L403.1 240.4L392.6 240.9z" fill="#fff" opacity="0.72"/><path d="M443.0 253.8L453.5 253.3L449.8 251.3L439.3 251.8z" fill="#fff" opacity="0.72"/><path d="M420.6 241.9L431.1 241.4L427.0 239.2L416.5 239.8z" fill="#fff" opacity="0.72"/><path d="M466.9 252.6L477.4 252.1L473.7 250.1L463.2 250.6z" fill="#fff" opacity="0.72"/><path d="M444.5 240.7L455.0 240.2L450.9 238.0L440.4 238.6z" fill="#fff" opacity="0.72"/><path d="M490.8 251.4L501.3 250.9L497.6 248.9L487.0 249.4z" fill="#fff" opacity="0.72"/><path d="M468.3 239.5L478.9 239.0L474.8 236.9L464.3 237.4z" fill="#fff" opacity="0.72"/><path d="M514.7 250.2L525.2 249.7L521.4 247.7L510.9 248.3z" fill="#fff" opacity="0.72"/><path d="M492.2 238.4L502.7 237.8L498.6 235.7L488.1 236.2z" fill="#fff" opacity="0.72"/><path d="M538.5 249.0L549.0 248.5L545.3 246.5L534.8 247.1z" fill="#fff" opacity="0.72"/><path d="M516.1 237.2L526.6 236.6L522.5 234.5L512.0 235.0z" fill="#fff" opacity="0.72"/><path d="M562.4 247.9L572.9 247.3L569.2 245.4L558.7 245.9z" fill="#fff" opacity="0.72"/><path d="M540.0 236.0L550.5 235.5L546.4 233.3L535.9 233.8z" fill="#fff" opacity="0.72"/><path d="M392.0 234.2L583.0 224.7L549.0 206.7L358.0 216.2z" fill="#9a9a9a" opacity="0.45"/><path d="M392.0 234.2L583.0 224.7" stroke="#9a9a9a" stroke-width="0.6" opacity="0.8"/><path d="M390.6 233.4L581.6 223.9" stroke="#9a9a9a" stroke-width="0.6" opacity="0.8"/><path d="M389.2 232.7L580.2 223.2" stroke="#9a9a9a" stroke-width="0.6" opacity="0.8"/><path d="M387.8 231.9L578.8 222.4" stroke="#9a9a9a" stroke-width="0.6" opacity="0.8"/><path d="M386.3 231.2L577.3 221.7" stroke="#9a9a9a" stroke-width="0.6" opacity="0.8"/><path d="M384.9 230.4L575.9 220.9" stroke="#9a9a9a" stroke-width="0.6" opacity="0.8"/><path d="M383.5 229.7L574.5 220.2" stroke="#9a9a9a" stroke-width="0.6" opacity="0.8"/><path d="M382.1 228.9L573.1 219.4" stroke="#9a9a9a" stroke-width="0.6" opacity="0.8"/><path d="M380.7 228.2L571.7 218.7" stroke="#9a9a9a" stroke-width="0.6" opacity="0.8"/><path d="M379.2 227.4L570.2 217.9" stroke="#9a9a9a" stroke-width="0.6" opacity="0.8"/><path d="M377.8 226.7L568.8 217.2" stroke="#9a9a9a" stroke-width="0.6" opacity="0.8"/><path d="M376.4 225.9L567.4 216.4" stroke="#9a9a9a" stroke-width="0.6" opacity="0.8"/><path d="M375.0 225.2L566.0 215.7" stroke="#9a9a9a" stroke-width="0.6" opacity="0.8"/><path d="M373.6 224.4L564.6 214.9" stroke="#9a9a9a" stroke-width="0.6" opacity="0.8"/><path d="M372.2 223.7L563.2 214.2" stroke="#9a9a9a" stroke-width="0.6" opacity="0.8"/><path d="M370.8 222.9L561.8 213.4" stroke="#9a9a9a" stroke-width="0.6" opacity="0.8"/><path d="M369.3 222.2L560.3 212.7" stroke="#9a9a9a" stroke-width="0.6" opacity="0.8"/><path d="M367.9 221.4L558.9 211.9" stroke="#9a9a9a" stroke-width="0.6" opacity="0.8"/><path d="M366.5 220.7L557.5 211.2" stroke="#9a9a9a" stroke-width="0.6" opacity="0.8"/><path d="M365.1 219.9L556.1 210.4" stroke="#9a9a9a" stroke-width="0.6" opacity="0.8"/><path d="M363.7 219.2L554.7 209.7" stroke="#9a9a9a" stroke-width="0.6" opacity="0.8"/><path d="M362.2 218.4L553.2 208.9" stroke="#9a9a9a" stroke-width="0.6" opacity="0.8"/><path d="M360.8 217.7L551.8 208.2" stroke="#9a9a9a" stroke-width="0.6" opacity="0.8"/><path d="M359.4 216.9L550.4 207.4" stroke="#9a9a9a" stroke-width="0.6" opacity="0.8"/><path d="M358.0 216.2L549.0 206.7" stroke="#9a9a9a" stroke-width="0.6" opacity="0.8"/><path d="M358.0 216.2L549.0 206.7L549.0 212.2L358.0 221.7z" fill="#949494" opacity="0.8"/><path d="M369.6 222.3L560.6 212.8L560.6 218.3L369.6 227.8z" fill="#949494" opacity="0.8"/><path d="M380.8 228.3L571.8 218.8L571.8 224.3L380.8 233.8z" fill="#949494" opacity="0.8"/><path d="M392.0 234.2L583.0 224.7L583.0 230.2L392.0 239.7z" fill="#949494" opacity="0.8"/><path d="M583.0 224.7L549.0 206.7L549.0 212.2L583.0 230.2z" fill="#9c9c9c" opacity="0.7"/><path d="M559.1 225.9L525.1 207.9L525.1 213.4L559.1 231.4z" fill="#9c9c9c" opacity="0.7"/><path d="M535.2 227.1L501.2 209.1L501.2 214.6L535.2 232.6z" fill="#9c9c9c" opacity="0.7"/><path d="M511.4 228.3L477.4 210.3L477.4 215.8L511.4 233.8z" fill="#9c9c9c" opacity="0.7"/><path d="M487.5 229.4L453.5 211.4L453.5 216.9L487.5 234.9z" fill="#9c9c9c" opacity="0.7"/><path d="M463.6 230.6L429.6 212.6L429.6 218.1L463.6 236.1z" fill="#9c9c9c" opacity="0.7"/><path d="M439.8 231.8L405.8 213.8L405.8 219.3L439.8 237.3z" fill="#9c9c9c" opacity="0.7"/><path d="M415.9 233.0L381.9 215.0L381.9 220.5L415.9 238.5z" fill="#9c9c9c" opacity="0.7"/><path d="M392.0 234.2L358.0 216.2L358.0 221.7L392.0 239.7z" fill="#9c9c9c" opacity="0.7"/><path d="M392.0 234.2L583.0 224.7" stroke="#8c8c8c" stroke-width="2.2" opacity="1"/><path d="M380.8 228.3L571.8 218.8" stroke="#8c8c8c" stroke-width="2.2" opacity="1"/><path d="M369.6 222.3L560.6 212.8" stroke="#8c8c8c" stroke-width="2.2" opacity="1"/><path d="M358.0 216.2L549.0 206.7" stroke="#8c8c8c" stroke-width="2.2" opacity="1"/><path d="M392.0 234.2L358.0 216.2" stroke="#929292" stroke-width="1.8" opacity="1"/><path d="M415.9 233.0L381.9 215.0" stroke="#929292" stroke-width="1.8" opacity="1"/><path d="M439.8 231.8L405.8 213.8" stroke="#929292" stroke-width="1.8" opacity="1"/><path d="M463.6 230.6L429.6 212.6" stroke="#929292" stroke-width="1.8" opacity="1"/><path d="M487.5 229.4L453.5 211.4" stroke="#929292" stroke-width="1.8" opacity="1"/><path d="M511.4 228.3L477.4 210.3" stroke="#929292" stroke-width="1.8" opacity="1"/><path d="M535.2 227.1L501.2 209.1" stroke="#929292" stroke-width="1.8" opacity="1"/><path d="M559.1 225.9L525.1 207.9" stroke="#929292" stroke-width="1.8" opacity="1"/><path d="M583.0 224.7L549.0 206.7" stroke="#929292" stroke-width="1.8" opacity="1"/><path d="M395.3 232.1L405.8 231.5L402.1 229.6L391.5 230.1z" fill="#fff" opacity="0.72"/><path d="M384.1 226.1L394.6 225.6L390.8 223.6L380.3 224.1z" fill="#fff" opacity="0.72"/><path d="M419.2 230.9L429.7 230.4L425.9 228.4L415.4 228.9z" fill="#fff" opacity="0.72"/><path d="M407.9 224.9L418.4 224.4L414.7 222.4L404.2 223.0z" fill="#fff" opacity="0.72"/><path d="M443.0 229.7L453.5 229.2L449.8 227.2L439.3 227.7z" fill="#fff" opacity="0.72"/><path d="M431.8 223.8L442.3 223.2L438.6 221.2L428.1 221.8z" fill="#fff" opacity="0.72"/><path d="M466.9 228.5L477.4 228.0L473.7 226.0L463.2 226.5z" fill="#fff" opacity="0.72"/><path d="M455.7 222.6L466.2 222.0L462.5 220.1L451.9 220.6z" fill="#fff" opacity="0.72"/><path d="M490.8 227.3L501.3 226.8L497.6 224.8L487.0 225.3z" fill="#fff" opacity="0.72"/><path d="M479.6 221.4L490.1 220.9L486.3 218.9L475.8 219.4z" fill="#fff" opacity="0.72"/><path d="M514.7 226.1L525.2 225.6L521.4 223.6L510.9 224.2z" fill="#fff" opacity="0.72"/><path d="M503.4 220.2L513.9 219.7L510.2 217.7L499.7 218.2z" fill="#fff" opacity="0.72"/><path d="M538.5 224.9L549.0 224.4L545.3 222.4L534.8 223.0z" fill="#fff" opacity="0.72"/><path d="M527.3 219.0L537.8 218.5L534.1 216.5L523.6 217.0z" fill="#fff" opacity="0.72"/><path d="M562.4 223.8L572.9 223.2L569.2 221.3L558.7 221.8z" fill="#fff" opacity="0.72"/><path d="M551.2 217.8L561.7 217.3L558.0 215.3L547.4 215.8z" fill="#fff" opacity="0.72"/><path d="M392.0 210.1L583.0 200.6L549.0 182.6L358.0 192.1z" fill="#9a9a9a" opacity="0.45"/><path d="M392.0 210.1L583.0 200.6" stroke="#9a9a9a" stroke-width="0.6" opacity="0.8"/><path d="M390.6 209.3L581.6 199.8" stroke="#9a9a9a" stroke-width="0.6" opacity="0.8"/><path d="M389.2 208.6L580.2 199.1" stroke="#9a9a9a" stroke-width="0.6" opacity="0.8"/><path d="M387.8 207.8L578.8 198.3" stroke="#9a9a9a" stroke-width="0.6" opacity="0.8"/><path d="M386.3 207.1L577.3 197.6" stroke="#9a9a9a" stroke-width="0.6" opacity="0.8"/><path d="M384.9 206.3L575.9 196.8" stroke="#9a9a9a" stroke-width="0.6" opacity="0.8"/><path d="M383.5 205.6L574.5 196.1" stroke="#9a9a9a" stroke-width="0.6" opacity="0.8"/><path d="M382.1 204.8L573.1 195.3" stroke="#9a9a9a" stroke-width="0.6" opacity="0.8"/><path d="M380.7 204.1L571.7 194.6" stroke="#9a9a9a" stroke-width="0.6" opacity="0.8"/><path d="M379.2 203.3L570.2 193.8" stroke="#9a9a9a" stroke-width="0.6" opacity="0.8"/><path d="M377.8 202.6L568.8 193.1" stroke="#9a9a9a" stroke-width="0.6" opacity="0.8"/><path d="M376.4 201.8L567.4 192.3" stroke="#9a9a9a" stroke-width="0.6" opacity="0.8"/><path d="M375.0 201.1L566.0 191.6" stroke="#9a9a9a" stroke-width="0.6" opacity="0.8"/><path d="M373.6 200.3L564.6 190.8" stroke="#9a9a9a" stroke-width="0.6" opacity="0.8"/><path d="M372.2 199.6L563.2 190.1" stroke="#9a9a9a" stroke-width="0.6" opacity="0.8"/><path d="M370.8 198.8L561.8 189.3" stroke="#9a9a9a" stroke-width="0.6" opacity="0.8"/><path d="M369.3 198.1L560.3 188.6" stroke="#9a9a9a" stroke-width="0.6" opacity="0.8"/><path d="M367.9 197.3L558.9 187.8" stroke="#9a9a9a" stroke-width="0.6" opacity="0.8"/><path d="M366.5 196.6L557.5 187.1" stroke="#9a9a9a" stroke-width="0.6" opacity="0.8"/><path d="M365.1 195.8L556.1 186.3" stroke="#9a9a9a" stroke-width="0.6" opacity="0.8"/><path d="M363.7 195.1L554.7 185.6" stroke="#9a9a9a" stroke-width="0.6" opacity="0.8"/><path d="M362.2 194.3L553.2 184.8" stroke="#9a9a9a" stroke-width="0.6" opacity="0.8"/><path d="M360.8 193.6L551.8 184.1" stroke="#9a9a9a" stroke-width="0.6" opacity="0.8"/><path d="M359.4 192.8L550.4 183.3" stroke="#9a9a9a" stroke-width="0.6" opacity="0.8"/><path d="M358.0 192.1L549.0 182.6" stroke="#9a9a9a" stroke-width="0.6" opacity="0.8"/><path d="M358.0 192.1L549.0 182.6L549.0 188.1L358.0 197.6z" fill="#949494" opacity="0.8"/><path d="M369.6 198.2L560.6 188.7L560.6 194.2L369.6 203.7z" fill="#949494" opacity="0.8"/><path d="M380.8 204.2L571.8 194.7L571.8 200.2L380.8 209.7z" fill="#949494" opacity="0.8"/><path d="M392.0 210.1L583.0 200.6L583.0 206.1L392.0 215.6z" fill="#949494" opacity="0.8"/><path d="M583.0 200.6L549.0 182.6L549.0 188.1L583.0 206.1z" fill="#9c9c9c" opacity="0.7"/><path d="M559.1 201.8L525.1 183.8L525.1 189.3L559.1 207.3z" fill="#9c9c9c" opacity="0.7"/><path d="M535.2 203.0L501.2 185.0L501.2 190.5L535.2 208.5z" fill="#9c9c9c" opacity="0.7"/><path d="M511.4 204.2L477.4 186.2L477.4 191.7L511.4 209.7z" fill="#9c9c9c" opacity="0.7"/><path d="M487.5 205.3L453.5 187.3L453.5 192.8L487.5 210.8z" fill="#9c9c9c" opacity="0.7"/><path d="M463.6 206.5L429.6 188.5L429.6 194.0L463.6 212.0z" fill="#9c9c9c" opacity="0.7"/><path d="M439.8 207.7L405.8 189.7L405.8 195.2L439.8 213.2z" fill="#9c9c9c" opacity="0.7"/><path d="M415.9 208.9L381.9 190.9L381.9 196.4L415.9 214.4z" fill="#9c9c9c" opacity="0.7"/><path d="M392.0 210.1L358.0 192.1L358.0 197.6L392.0 215.6z" fill="#9c9c9c" opacity="0.7"/><path d="M392.0 210.1L583.0 200.6" stroke="#8c8c8c" stroke-width="2.2" opacity="1"/><path d="M380.8 204.2L571.8 194.7" stroke="#8c8c8c" stroke-width="2.2" opacity="1"/><path d="M369.6 198.2L560.6 188.7" stroke="#8c8c8c" stroke-width="2.2" opacity="1"/><path d="M358.0 192.1L549.0 182.6" stroke="#8c8c8c" stroke-width="2.2" opacity="1"/><path d="M392.0 210.1L358.0 192.1" stroke="#929292" stroke-width="1.8" opacity="1"/><path d="M415.9 208.9L381.9 190.9" stroke="#929292" stroke-width="1.8" opacity="1"/><path d="M439.8 207.7L405.8 189.7" stroke="#929292" stroke-width="1.8" opacity="1"/><path d="M463.6 206.5L429.6 188.5" stroke="#929292" stroke-width="1.8" opacity="1"/><path d="M487.5 205.3L453.5 187.3" stroke="#929292" stroke-width="1.8" opacity="1"/><path d="M511.4 204.2L477.4 186.2" stroke="#929292" stroke-width="1.8" opacity="1"/><path d="M535.2 203.0L501.2 185.0" stroke="#929292" stroke-width="1.8" opacity="1"/><path d="M559.1 201.8L525.1 183.8" stroke="#929292" stroke-width="1.8" opacity="1"/><path d="M583.0 200.6L549.0 182.6" stroke="#929292" stroke-width="1.8" opacity="1"/><path d="M384.1 202.0L394.6 201.5L390.8 199.5L380.3 200.0z" fill="#fff" opacity="0.72"/><path d="M372.8 196.1L383.4 195.6L379.3 193.4L368.8 193.9z" fill="#fff" opacity="0.72"/><path d="M407.9 200.8L418.4 200.3L414.7 198.3L404.2 198.9z" fill="#fff" opacity="0.72"/><path d="M396.7 194.9L407.2 194.4L403.1 192.2L392.6 192.7z" fill="#fff" opacity="0.72"/><path d="M431.8 199.7L442.3 199.1L438.6 197.1L428.1 197.7z" fill="#fff" opacity="0.72"/><path d="M420.6 193.7L431.1 193.2L427.0 191.0L416.5 191.6z" fill="#fff" opacity="0.72"/><path d="M455.7 198.5L466.2 197.9L462.5 196.0L451.9 196.5z" fill="#fff" opacity="0.72"/><path d="M444.5 192.5L455.0 192.0L450.9 189.8L440.4 190.4z" fill="#fff" opacity="0.72"/><path d="M479.6 197.3L490.1 196.8L486.3 194.8L475.8 195.3z" fill="#fff" opacity="0.72"/><path d="M468.3 191.3L478.9 190.8L474.8 188.7L464.3 189.2z" fill="#fff" opacity="0.72"/><path d="M503.4 196.1L513.9 195.6L510.2 193.6L499.7 194.1z" fill="#fff" opacity="0.72"/><path d="M492.2 190.2L502.7 189.6L498.6 187.5L488.1 188.0z" fill="#fff" opacity="0.72"/><path d="M527.3 194.9L537.8 194.4L534.1 192.4L523.6 192.9z" fill="#fff" opacity="0.72"/><path d="M516.1 189.0L526.6 188.4L522.5 186.3L512.0 186.8z" fill="#fff" opacity="0.72"/><path d="M551.2 193.7L561.7 193.2L558.0 191.2L547.4 191.7z" fill="#fff" opacity="0.72"/><path d="M540.0 187.8L550.5 187.3L546.4 185.1L535.9 185.6z" fill="#fff" opacity="0.72"/><path d="M392.0 186.0L583.0 176.5L549.0 158.5L358.0 168.0z" fill="#9a9a9a" opacity="0.45"/><path d="M392.0 186.0L583.0 176.5" stroke="#9a9a9a" stroke-width="0.6" opacity="0.8"/><path d="M390.6 185.2L581.6 175.8" stroke="#9a9a9a" stroke-width="0.6" opacity="0.8"/><path d="M389.2 184.5L580.2 175.0" stroke="#9a9a9a" stroke-width="0.6" opacity="0.8"/><path d="M387.8 183.8L578.8 174.2" stroke="#9a9a9a" stroke-width="0.6" opacity="0.8"/><path d="M386.3 183.0L577.3 173.5" stroke="#9a9a9a" stroke-width="0.6" opacity="0.8"/><path d="M384.9 182.2L575.9 172.8" stroke="#9a9a9a" stroke-width="0.6" opacity="0.8"/><path d="M383.5 181.5L574.5 172.0" stroke="#9a9a9a" stroke-width="0.6" opacity="0.8"/><path d="M382.1 180.8L573.1 171.2" stroke="#9a9a9a" stroke-width="0.6" opacity="0.8"/><path d="M380.7 180.0L571.7 170.5" stroke="#9a9a9a" stroke-width="0.6" opacity="0.8"/><path d="M379.2 179.2L570.2 169.8" stroke="#9a9a9a" stroke-width="0.6" opacity="0.8"/><path d="M377.8 178.5L568.8 169.0" stroke="#9a9a9a" stroke-width="0.6" opacity="0.8"/><path d="M376.4 177.8L567.4 168.2" stroke="#9a9a9a" stroke-width="0.6" opacity="0.8"/><path d="M375.0 177.0L566.0 167.5" stroke="#9a9a9a" stroke-width="0.6" opacity="0.8"/><path d="M373.6 176.2L564.6 166.8" stroke="#9a9a9a" stroke-width="0.6" opacity="0.8"/><path d="M372.2 175.5L563.2 166.0" stroke="#9a9a9a" stroke-width="0.6" opacity="0.8"/><path d="M370.8 174.8L561.8 165.2" stroke="#9a9a9a" stroke-width="0.6" opacity="0.8"/><path d="M369.3 174.0L560.3 164.5" stroke="#9a9a9a" stroke-width="0.6" opacity="0.8"/><path d="M367.9 173.2L558.9 163.8" stroke="#9a9a9a" stroke-width="0.6" opacity="0.8"/><path d="M366.5 172.5L557.5 163.0" stroke="#9a9a9a" stroke-width="0.6" opacity="0.8"/><path d="M365.1 171.8L556.1 162.2" stroke="#9a9a9a" stroke-width="0.6" opacity="0.8"/><path d="M363.7 171.0L554.7 161.5" stroke="#9a9a9a" stroke-width="0.6" opacity="0.8"/><path d="M362.2 170.2L553.2 160.8" stroke="#9a9a9a" stroke-width="0.6" opacity="0.8"/><path d="M360.8 169.5L551.8 160.0" stroke="#9a9a9a" stroke-width="0.6" opacity="0.8"/><path d="M359.4 168.8L550.4 159.2" stroke="#9a9a9a" stroke-width="0.6" opacity="0.8"/><path d="M358.0 168.0L549.0 158.5" stroke="#9a9a9a" stroke-width="0.6" opacity="0.8"/><path d="M358.0 168.0L549.0 158.5L549.0 164.0L358.0 173.5z" fill="#949494" opacity="0.8"/><path d="M369.6 174.1L560.6 164.6L560.6 170.1L369.6 179.6z" fill="#949494" opacity="0.8"/><path d="M380.8 180.1L571.8 170.6L571.8 176.1L380.8 185.6z" fill="#949494" opacity="0.8"/><path d="M392.0 186.0L583.0 176.5L583.0 182.0L392.0 191.5z" fill="#949494" opacity="0.8"/><path d="M583.0 176.5L549.0 158.5L549.0 164.0L583.0 182.0z" fill="#9c9c9c" opacity="0.7"/><path d="M559.1 177.7L525.1 159.7L525.1 165.2L559.1 183.2z" fill="#9c9c9c" opacity="0.7"/><path d="M535.2 178.9L501.2 160.9L501.2 166.4L535.2 184.4z" fill="#9c9c9c" opacity="0.7"/><path d="M511.4 180.1L477.4 162.1L477.4 167.6L511.4 185.6z" fill="#9c9c9c" opacity="0.7"/><path d="M487.5 181.2L453.5 163.2L453.5 168.8L487.5 186.8z" fill="#9c9c9c" opacity="0.7"/><path d="M463.6 182.4L429.6 164.4L429.6 169.9L463.6 187.9z" fill="#9c9c9c" opacity="0.7"/><path d="M439.8 183.6L405.8 165.6L405.8 171.1L439.8 189.1z" fill="#9c9c9c" opacity="0.7"/><path d="M415.9 184.8L381.9 166.8L381.9 172.3L415.9 190.3z" fill="#9c9c9c" opacity="0.7"/><path d="M392.0 186.0L358.0 168.0L358.0 173.5L392.0 191.5z" fill="#9c9c9c" opacity="0.7"/><path d="M392.0 186.0L583.0 176.5" stroke="#8c8c8c" stroke-width="2.2" opacity="1"/><path d="M380.8 180.1L571.8 170.6" stroke="#8c8c8c" stroke-width="2.2" opacity="1"/><path d="M369.6 174.1L560.6 164.6" stroke="#8c8c8c" stroke-width="2.2" opacity="1"/><path d="M358.0 168.0L549.0 158.5" stroke="#8c8c8c" stroke-width="2.2" opacity="1"/><path d="M392.0 186.0L358.0 168.0" stroke="#929292" stroke-width="1.8" opacity="1"/><path d="M415.9 184.8L381.9 166.8" stroke="#929292" stroke-width="1.8" opacity="1"/><path d="M439.8 183.6L405.8 165.6" stroke="#929292" stroke-width="1.8" opacity="1"/><path d="M463.6 182.4L429.6 164.4" stroke="#929292" stroke-width="1.8" opacity="1"/><path d="M487.5 181.2L453.5 163.2" stroke="#929292" stroke-width="1.8" opacity="1"/><path d="M511.4 180.1L477.4 162.1" stroke="#929292" stroke-width="1.8" opacity="1"/><path d="M535.2 178.9L501.2 160.9" stroke="#929292" stroke-width="1.8" opacity="1"/><path d="M559.1 177.7L525.1 159.7" stroke="#929292" stroke-width="1.8" opacity="1"/><path d="M583.0 176.5L549.0 158.5" stroke="#929292" stroke-width="1.8" opacity="1"/><path d="M395.3 183.9L405.8 183.3L402.1 181.4L391.5 181.9z" fill="#fff" opacity="0.72"/><path d="M372.8 172.0L383.4 171.5L379.3 169.3L368.8 169.8z" fill="#fff" opacity="0.72"/><path d="M419.2 182.7L429.7 182.2L425.9 180.2L415.4 180.7z" fill="#fff" opacity="0.72"/><path d="M396.7 170.8L407.2 170.3L403.1 168.1L392.6 168.6z" fill="#fff" opacity="0.72"/><path d="M443.0 181.5L453.5 181.0L449.8 179.0L439.3 179.5z" fill="#fff" opacity="0.72"/><path d="M420.6 169.6L431.1 169.1L427.0 166.9L416.5 167.5z" fill="#fff" opacity="0.72"/><path d="M466.9 180.3L477.4 179.8L473.7 177.8L463.2 178.3z" fill="#fff" opacity="0.72"/><path d="M444.5 168.4L455.0 167.9L450.9 165.7L440.4 166.3z" fill="#fff" opacity="0.72"/><path d="M490.8 179.1L501.3 178.6L497.6 176.6L487.0 177.1z" fill="#fff" opacity="0.72"/><path d="M468.3 167.2L478.9 166.7L474.8 164.6L464.3 165.1z" fill="#fff" opacity="0.72"/><path d="M514.7 177.9L525.2 177.4L521.4 175.4L510.9 176.0z" fill="#fff" opacity="0.72"/><path d="M492.2 166.1L502.7 165.5L498.6 163.4L488.1 163.9z" fill="#fff" opacity="0.72"/><path d="M538.5 176.7L549.0 176.2L545.3 174.2L534.8 174.8z" fill="#fff" opacity="0.72"/><path d="M516.1 164.9L526.6 164.3L522.5 162.2L512.0 162.7z" fill="#fff" opacity="0.72"/><path d="M562.4 175.6L572.9 175.0L569.2 173.1L558.7 173.6z" fill="#fff" opacity="0.72"/><path d="M540.0 163.7L550.5 163.2L546.4 161.0L535.9 161.5z" fill="#fff" opacity="0.72"/><path d="M392.0 161.9L583.0 152.4L549.0 134.4L358.0 143.9z" fill="#9a9a9a" opacity="0.45"/><path d="M392.0 161.9L583.0 152.4" stroke="#9a9a9a" stroke-width="0.6" opacity="0.8"/><path d="M390.6 161.1L581.6 151.6" stroke="#9a9a9a" stroke-width="0.6" opacity="0.8"/><path d="M389.2 160.4L580.2 150.9" stroke="#9a9a9a" stroke-width="0.6" opacity="0.8"/><path d="M387.8 159.6L578.8 150.1" stroke="#9a9a9a" stroke-width="0.6" opacity="0.8"/><path d="M386.3 158.9L577.3 149.4" stroke="#9a9a9a" stroke-width="0.6" opacity="0.8"/><path d="M384.9 158.1L575.9 148.6" stroke="#9a9a9a" stroke-width="0.6" opacity="0.8"/><path d="M383.5 157.4L574.5 147.9" stroke="#9a9a9a" stroke-width="0.6" opacity="0.8"/><path d="M382.1 156.6L573.1 147.1" stroke="#9a9a9a" stroke-width="0.6" opacity="0.8"/><path d="M380.7 155.9L571.7 146.4" stroke="#9a9a9a" stroke-width="0.6" opacity="0.8"/><path d="M379.2 155.1L570.2 145.6" stroke="#9a9a9a" stroke-width="0.6" opacity="0.8"/><path d="M377.8 154.4L568.8 144.9" stroke="#9a9a9a" stroke-width="0.6" opacity="0.8"/><path d="M376.4 153.6L567.4 144.1" stroke="#9a9a9a" stroke-width="0.6" opacity="0.8"/><path d="M375.0 152.9L566.0 143.4" stroke="#9a9a9a" stroke-width="0.6" opacity="0.8"/><path d="M373.6 152.1L564.6 142.6" stroke="#9a9a9a" stroke-width="0.6" opacity="0.8"/><path d="M372.2 151.4L563.2 141.9" stroke="#9a9a9a" stroke-width="0.6" opacity="0.8"/><path d="M370.8 150.6L561.8 141.1" stroke="#9a9a9a" stroke-width="0.6" opacity="0.8"/><path d="M369.3 149.9L560.3 140.4" stroke="#9a9a9a" stroke-width="0.6" opacity="0.8"/><path d="M367.9 149.1L558.9 139.6" stroke="#9a9a9a" stroke-width="0.6" opacity="0.8"/><path d="M366.5 148.4L557.5 138.9" stroke="#9a9a9a" stroke-width="0.6" opacity="0.8"/><path d="M365.1 147.6L556.1 138.1" stroke="#9a9a9a" stroke-width="0.6" opacity="0.8"/><path d="M363.7 146.9L554.7 137.4" stroke="#9a9a9a" stroke-width="0.6" opacity="0.8"/><path d="M362.2 146.1L553.2 136.6" stroke="#9a9a9a" stroke-width="0.6" opacity="0.8"/><path d="M360.8 145.4L551.8 135.9" stroke="#9a9a9a" stroke-width="0.6" opacity="0.8"/><path d="M359.4 144.6L550.4 135.1" stroke="#9a9a9a" stroke-width="0.6" opacity="0.8"/><path d="M358.0 143.9L549.0 134.4" stroke="#9a9a9a" stroke-width="0.6" opacity="0.8"/><path d="M358.0 143.9L549.0 134.4L549.0 139.9L358.0 149.4z" fill="#949494" opacity="0.8"/><path d="M369.6 150.0L560.6 140.5L560.6 146.0L369.6 155.5z" fill="#949494" opacity="0.8"/><path d="M380.8 156.0L571.8 146.5L571.8 152.0L380.8 161.5z" fill="#949494" opacity="0.8"/><path d="M392.0 161.9L583.0 152.4L583.0 157.9L392.0 167.4z" fill="#949494" opacity="0.8"/><path d="M583.0 152.4L549.0 134.4L549.0 139.9L583.0 157.9z" fill="#9c9c9c" opacity="0.7"/><path d="M559.1 153.6L525.1 135.6L525.1 141.1L559.1 159.1z" fill="#9c9c9c" opacity="0.7"/><path d="M535.2 154.8L501.2 136.8L501.2 142.3L535.2 160.3z" fill="#9c9c9c" opacity="0.7"/><path d="M511.4 156.0L477.4 138.0L477.4 143.5L511.4 161.5z" fill="#9c9c9c" opacity="0.7"/><path d="M487.5 157.1L453.5 139.1L453.5 144.6L487.5 162.6z" fill="#9c9c9c" opacity="0.7"/><path d="M463.6 158.3L429.6 140.3L429.6 145.8L463.6 163.8z" fill="#9c9c9c" opacity="0.7"/><path d="M439.8 159.5L405.8 141.5L405.8 147.0L439.8 165.0z" fill="#9c9c9c" opacity="0.7"/><path d="M415.9 160.7L381.9 142.7L381.9 148.2L415.9 166.2z" fill="#9c9c9c" opacity="0.7"/><path d="M392.0 161.9L358.0 143.9L358.0 149.4L392.0 167.4z" fill="#9c9c9c" opacity="0.7"/><path d="M392.0 161.9L583.0 152.4" stroke="#8c8c8c" stroke-width="2.2" opacity="1"/><path d="M380.8 156.0L571.8 146.5" stroke="#8c8c8c" stroke-width="2.2" opacity="1"/><path d="M369.6 150.0L560.6 140.5" stroke="#8c8c8c" stroke-width="2.2" opacity="1"/><path d="M358.0 143.9L549.0 134.4" stroke="#8c8c8c" stroke-width="2.2" opacity="1"/><path d="M392.0 161.9L358.0 143.9" stroke="#929292" stroke-width="1.8" opacity="1"/><path d="M415.9 160.7L381.9 142.7" stroke="#929292" stroke-width="1.8" opacity="1"/><path d="M439.8 159.5L405.8 141.5" stroke="#929292" stroke-width="1.8" opacity="1"/><path d="M463.6 158.3L429.6 140.3" stroke="#929292" stroke-width="1.8" opacity="1"/><path d="M487.5 157.1L453.5 139.1" stroke="#929292" stroke-width="1.8" opacity="1"/><path d="M511.4 156.0L477.4 138.0" stroke="#929292" stroke-width="1.8" opacity="1"/><path d="M535.2 154.8L501.2 136.8" stroke="#929292" stroke-width="1.8" opacity="1"/><path d="M559.1 153.6L525.1 135.6" stroke="#929292" stroke-width="1.8" opacity="1"/><path d="M583.0 152.4L549.0 134.4" stroke="#929292" stroke-width="1.8" opacity="1"/><path d="M395.3 159.8L405.8 159.2L402.1 157.3L391.5 157.8z" fill="#fff" opacity="0.72"/><path d="M384.1 153.8L394.6 153.3L390.8 151.3L380.3 151.8z" fill="#fff" opacity="0.72"/><path d="M419.2 158.6L429.7 158.1L425.9 156.1L415.4 156.6z" fill="#fff" opacity="0.72"/><path d="M407.9 152.6L418.4 152.1L414.7 150.1L404.2 150.7z" fill="#fff" opacity="0.72"/><path d="M443.0 157.4L453.5 156.9L449.8 154.9L439.3 155.4z" fill="#fff" opacity="0.72"/><path d="M431.8 151.5L442.3 150.9L438.6 148.9L428.1 149.5z" fill="#fff" opacity="0.72"/><path d="M466.9 156.2L477.4 155.7L473.7 153.7L463.2 154.2z" fill="#fff" opacity="0.72"/><path d="M455.7 150.3L466.2 149.7L462.5 147.8L451.9 148.3z" fill="#fff" opacity="0.72"/><path d="M490.8 155.0L501.3 154.5L497.6 152.5L487.0 153.0z" fill="#fff" opacity="0.72"/><path d="M479.6 149.1L490.1 148.6L486.3 146.6L475.8 147.1z" fill="#fff" opacity="0.72"/><path d="M514.7 153.8L525.2 153.3L521.4 151.3L510.9 151.9z" fill="#fff" opacity="0.72"/><path d="M503.4 147.9L513.9 147.4L510.2 145.4L499.7 145.9z" fill="#fff" opacity="0.72"/><path d="M538.5 152.6L549.0 152.1L545.3 150.1L534.8 150.7z" fill="#fff" opacity="0.72"/><path d="M527.3 146.7L537.8 146.2L534.1 144.2L523.6 144.7z" fill="#fff" opacity="0.72"/><path d="M562.4 151.5L572.9 150.9L569.2 149.0L558.7 149.5z" fill="#fff" opacity="0.72"/><path d="M551.2 145.5L561.7 145.0L558.0 143.0L547.4 143.5z" fill="#fff" opacity="0.72"/><rect x="546.8" y="254.9" width="4.4" height="24.4" fill="#22dca0" opacity="0.95"/><rect x="546.8" y="230.8" width="4.4" height="24.4" fill="#22dca0" opacity="0.95"/><rect x="546.8" y="206.7" width="4.4" height="24.4" fill="#1c8ee6" opacity="0.95"/><rect x="546.8" y="182.6" width="4.4" height="24.4" fill="#1c8ee6" opacity="0.95"/><rect x="546.8" y="158.5" width="4.4" height="24.4" fill="#114ae6" opacity="0.95"/><rect x="546.8" y="134.4" width="4.4" height="24.4" fill="#114ae6" opacity="0.95"/><rect x="522.9" y="256.1" width="4.4" height="24.4" fill="#2ce424" opacity="0.82"/><rect x="522.9" y="232.0" width="4.4" height="24.4" fill="#22dca0" opacity="0.82"/><rect x="522.9" y="207.9" width="4.4" height="24.4" fill="#1c8ee6" opacity="0.82"/><rect x="522.9" y="183.8" width="4.4" height="24.4" fill="#1c8ee6" opacity="0.82"/><rect x="522.9" y="159.7" width="4.4" height="24.4" fill="#114ae6" opacity="0.82"/><rect x="522.9" y="135.6" width="4.4" height="24.4" fill="#114ae6" opacity="0.82"/><rect x="499.1" y="257.3" width="4.4" height="24.4" fill="#2ce424" opacity="0.82"/><rect x="499.1" y="233.2" width="4.4" height="24.4" fill="#22dca0" opacity="0.82"/><rect x="499.1" y="209.1" width="4.4" height="24.4" fill="#1c8ee6" opacity="0.82"/><rect x="499.1" y="185.0" width="4.4" height="24.4" fill="#1c8ee6" opacity="0.82"/><rect x="499.1" y="160.9" width="4.4" height="24.4" fill="#114ae6" opacity="0.82"/><rect x="499.1" y="136.8" width="4.4" height="24.4" fill="#114ae6" opacity="0.82"/><rect x="475.2" y="258.5" width="4.4" height="24.4" fill="#2ce424" opacity="0.82"/><rect x="475.2" y="234.4" width="4.4" height="24.4" fill="#22dca0" opacity="0.82"/><rect x="475.2" y="210.3" width="4.4" height="24.4" fill="#1c8ee6" opacity="0.82"/><rect x="475.2" y="186.2" width="4.4" height="24.4" fill="#1c8ee6" opacity="0.82"/><rect x="475.2" y="162.1" width="4.4" height="24.4" fill="#114ae6" opacity="0.82"/><rect x="475.2" y="138.0" width="4.4" height="24.4" fill="#114ae6" opacity="0.82"/><rect x="451.3" y="259.6" width="4.4" height="24.4" fill="#2ce424" opacity="0.82"/><rect x="451.3" y="235.6" width="4.4" height="24.4" fill="#22dca0" opacity="0.82"/><rect x="451.3" y="211.4" width="4.4" height="24.4" fill="#1c8ee6" opacity="0.82"/><rect x="451.3" y="187.3" width="4.4" height="24.4" fill="#1c8ee6" opacity="0.82"/><rect x="451.3" y="163.2" width="4.4" height="24.4" fill="#114ae6" opacity="0.82"/><rect x="451.3" y="139.1" width="4.4" height="24.4" fill="#114ae6" opacity="0.82"/><rect x="427.4" y="260.8" width="4.4" height="24.4" fill="#2ce424" opacity="0.82"/><rect x="427.4" y="236.7" width="4.4" height="24.4" fill="#22dca0" opacity="0.82"/><rect x="427.4" y="212.6" width="4.4" height="24.4" fill="#1c8ee6" opacity="0.82"/><rect x="427.4" y="188.5" width="4.4" height="24.4" fill="#1c8ee6" opacity="0.82"/><rect x="427.4" y="164.4" width="4.4" height="24.4" fill="#114ae6" opacity="0.82"/><rect x="427.4" y="140.3" width="4.4" height="24.4" fill="#114ae6" opacity="0.82"/><rect x="403.6" y="262.0" width="4.4" height="24.4" fill="#2ce424" opacity="0.82"/><rect x="403.6" y="237.9" width="4.4" height="24.4" fill="#22dca0" opacity="0.82"/><rect x="403.6" y="213.8" width="4.4" height="24.4" fill="#1c8ee6" opacity="0.82"/><rect x="403.6" y="189.7" width="4.4" height="24.4" fill="#1c8ee6" opacity="0.82"/><rect x="403.6" y="165.6" width="4.4" height="24.4" fill="#114ae6" opacity="0.82"/><rect x="403.6" y="141.5" width="4.4" height="24.4" fill="#114ae6" opacity="0.82"/><rect x="379.7" y="263.2" width="4.4" height="24.4" fill="#2ce424" opacity="0.82"/><rect x="379.7" y="239.1" width="4.4" height="24.4" fill="#22dca0" opacity="0.82"/><rect x="379.7" y="215.0" width="4.4" height="24.4" fill="#1c8ee6" opacity="0.82"/><rect x="379.7" y="190.9" width="4.4" height="24.4" fill="#1c8ee6" opacity="0.82"/><rect x="379.7" y="166.8" width="4.4" height="24.4" fill="#114ae6" opacity="0.82"/><rect x="379.7" y="142.7" width="4.4" height="24.4" fill="#114ae6" opacity="0.82"/><rect x="354.0" y="264.4" width="8" height="24.4" fill="#9cf02c" opacity="0.82"/><rect x="354.0" y="240.3" width="8" height="24.4" fill="#2ce424" opacity="0.82"/><rect x="354.0" y="216.2" width="8" height="24.4" fill="#22dca0" opacity="0.82"/><rect x="354.0" y="192.1" width="8" height="24.4" fill="#1c8ee6" opacity="0.82"/><rect x="354.0" y="168.0" width="8" height="24.4" fill="#114ae6" opacity="0.82"/><rect x="354.0" y="143.9" width="8" height="24.4" fill="#114ae6" opacity="0.82"/><rect x="558.2" y="261.0" width="4.8" height="24.4" fill="#2ce424" opacity="0.95"/><rect x="558.2" y="236.9" width="4.8" height="24.4" fill="#22dca0" opacity="0.95"/><rect x="558.2" y="212.8" width="4.8" height="24.4" fill="#1c8ee6" opacity="0.95"/><rect x="558.2" y="188.7" width="4.8" height="24.4" fill="#1c8ee6" opacity="0.95"/><rect x="558.2" y="164.6" width="4.8" height="24.4" fill="#114ae6" opacity="0.95"/><rect x="558.2" y="140.5" width="4.8" height="24.4" fill="#114ae6" opacity="0.95"/><rect x="510.4" y="263.4" width="4.8" height="24.4" fill="#2ce424" opacity="0.82"/><rect x="510.4" y="239.3" width="4.8" height="24.4" fill="#22dca0" opacity="0.82"/><rect x="510.4" y="215.2" width="4.8" height="24.4" fill="#22dca0" opacity="0.82"/><rect x="510.4" y="191.1" width="4.8" height="24.4" fill="#1c8ee6" opacity="0.82"/><rect x="510.4" y="167.0" width="4.8" height="24.4" fill="#114ae6" opacity="0.82"/><rect x="510.4" y="142.9" width="4.8" height="24.4" fill="#114ae6" opacity="0.82"/><rect x="486.5" y="264.6" width="4.8" height="24.4" fill="#2ce424" opacity="0.82"/><rect x="486.5" y="240.5" width="4.8" height="24.4" fill="#22dca0" opacity="0.82"/><rect x="486.5" y="216.4" width="4.8" height="24.4" fill="#22dca0" opacity="0.82"/><rect x="486.5" y="192.3" width="4.8" height="24.4" fill="#1c8ee6" opacity="0.82"/><rect x="486.5" y="168.2" width="4.8" height="24.4" fill="#114ae6" opacity="0.82"/><rect x="486.5" y="144.1" width="4.8" height="24.4" fill="#114ae6" opacity="0.82"/><rect x="462.7" y="265.8" width="4.8" height="24.4" fill="#2ce424" opacity="0.82"/><rect x="462.7" y="241.7" width="4.8" height="24.4" fill="#22dca0" opacity="0.82"/><rect x="462.7" y="217.6" width="4.8" height="24.4" fill="#22dca0" opacity="0.82"/><rect x="462.7" y="193.5" width="4.8" height="24.4" fill="#1c8ee6" opacity="0.82"/><rect x="462.7" y="169.4" width="4.8" height="24.4" fill="#114ae6" opacity="0.82"/><rect x="462.7" y="145.3" width="4.8" height="24.4" fill="#114ae6" opacity="0.82"/><rect x="438.8" y="267.0" width="4.8" height="24.4" fill="#2ce424" opacity="0.82"/><rect x="438.8" y="242.9" width="4.8" height="24.4" fill="#22dca0" opacity="0.82"/><rect x="438.8" y="218.8" width="4.8" height="24.4" fill="#1c8ee6" opacity="0.82"/><rect x="438.8" y="194.7" width="4.8" height="24.4" fill="#1c8ee6" opacity="0.82"/><rect x="438.8" y="170.6" width="4.8" height="24.4" fill="#114ae6" opacity="0.82"/><rect x="438.8" y="146.5" width="4.8" height="24.4" fill="#114ae6" opacity="0.82"/><rect x="414.9" y="268.1" width="4.8" height="24.4" fill="#2ce424" opacity="0.82"/><rect x="414.9" y="244.0" width="4.8" height="24.4" fill="#22dca0" opacity="0.82"/><rect x="414.9" y="219.9" width="4.8" height="24.4" fill="#22dca0" opacity="0.82"/><rect x="414.9" y="195.8" width="4.8" height="24.4" fill="#1c8ee6" opacity="0.82"/><rect x="414.9" y="171.7" width="4.8" height="24.4" fill="#114ae6" opacity="0.82"/><rect x="414.9" y="147.6" width="4.8" height="24.4" fill="#114ae6" opacity="0.82"/><rect x="367.2" y="270.5" width="4.8" height="24.4" fill="#2ce424" opacity="0.82"/><rect x="367.2" y="246.4" width="4.8" height="24.4" fill="#2ce424" opacity="0.82"/><rect x="367.2" y="222.3" width="4.8" height="24.4" fill="#22dca0" opacity="0.82"/><rect x="367.2" y="198.2" width="4.8" height="24.4" fill="#1c8ee6" opacity="0.82"/><rect x="367.2" y="174.1" width="4.8" height="24.4" fill="#114ae6" opacity="0.82"/><rect x="367.2" y="150.0" width="4.8" height="24.4" fill="#114ae6" opacity="0.82"/><rect x="569.4" y="267.0" width="4.8" height="24.4" fill="#2ce424" opacity="0.95"/><rect x="569.4" y="242.9" width="4.8" height="24.4" fill="#22dca0" opacity="0.95"/><rect x="569.4" y="218.8" width="4.8" height="24.4" fill="#1c8ee6" opacity="0.95"/><rect x="569.4" y="194.7" width="4.8" height="24.4" fill="#1c8ee6" opacity="0.95"/><rect x="569.4" y="170.6" width="4.8" height="24.4" fill="#114ae6" opacity="0.95"/><rect x="569.4" y="146.5" width="4.8" height="24.4" fill="#114ae6" opacity="0.95"/><rect x="545.5" y="268.1" width="4.8" height="24.4" fill="#2ce424" opacity="0.82"/><rect x="545.5" y="244.0" width="4.8" height="24.4" fill="#22dca0" opacity="0.82"/><rect x="545.5" y="219.9" width="4.8" height="24.4" fill="#1c8ee6" opacity="0.82"/><rect x="545.5" y="195.8" width="4.8" height="24.4" fill="#1c8ee6" opacity="0.82"/><rect x="545.5" y="171.7" width="4.8" height="24.4" fill="#114ae6" opacity="0.82"/><rect x="545.5" y="147.6" width="4.8" height="24.4" fill="#114ae6" opacity="0.82"/><rect x="521.6" y="269.3" width="4.8" height="24.4" fill="#2ce424" opacity="0.82"/><rect x="521.6" y="245.2" width="4.8" height="24.4" fill="#22dca0" opacity="0.82"/><rect x="521.6" y="221.1" width="4.8" height="24.4" fill="#1c8ee6" opacity="0.82"/><rect x="521.6" y="197.0" width="4.8" height="24.4" fill="#1c8ee6" opacity="0.82"/><rect x="521.6" y="172.9" width="4.8" height="24.4" fill="#114ae6" opacity="0.82"/><rect x="521.6" y="148.8" width="4.8" height="24.4" fill="#114ae6" opacity="0.82"/><rect x="497.8" y="270.5" width="4.8" height="24.4" fill="#2ce424" opacity="0.82"/><rect x="497.8" y="246.4" width="4.8" height="24.4" fill="#22dca0" opacity="0.82"/><rect x="497.8" y="222.3" width="4.8" height="24.4" fill="#22dca0" opacity="0.82"/><rect x="497.8" y="198.2" width="4.8" height="24.4" fill="#1c8ee6" opacity="0.82"/><rect x="497.8" y="174.1" width="4.8" height="24.4" fill="#114ae6" opacity="0.82"/><rect x="497.8" y="150.0" width="4.8" height="24.4" fill="#114ae6" opacity="0.82"/><rect x="450.0" y="272.9" width="4.8" height="24.4" fill="#2ce424" opacity="0.82"/><rect x="450.0" y="248.8" width="4.8" height="24.4" fill="#22dca0" opacity="0.82"/><rect x="450.0" y="224.7" width="4.8" height="24.4" fill="#1c8ee6" opacity="0.82"/><rect x="450.0" y="200.6" width="4.8" height="24.4" fill="#1c8ee6" opacity="0.82"/><rect x="450.0" y="176.5" width="4.8" height="24.4" fill="#114ae6" opacity="0.82"/><rect x="450.0" y="152.4" width="4.8" height="24.4" fill="#114ae6" opacity="0.82"/><rect x="426.1" y="274.1" width="4.8" height="24.4" fill="#2ce424" opacity="0.82"/><rect x="426.1" y="250.0" width="4.8" height="24.4" fill="#22dca0" opacity="0.82"/><rect x="426.1" y="225.9" width="4.8" height="24.4" fill="#1c8ee6" opacity="0.82"/><rect x="426.1" y="201.8" width="4.8" height="24.4" fill="#1c8ee6" opacity="0.82"/><rect x="426.1" y="177.7" width="4.8" height="24.4" fill="#114ae6" opacity="0.82"/><rect x="426.1" y="153.6" width="4.8" height="24.4" fill="#114ae6" opacity="0.82"/><rect x="402.3" y="275.3" width="4.8" height="24.4" fill="#2ce424" opacity="0.82"/><rect x="402.3" y="251.2" width="4.8" height="24.4" fill="#22dca0" opacity="0.82"/><rect x="402.3" y="227.1" width="4.8" height="24.4" fill="#1c8ee6" opacity="0.82"/><rect x="402.3" y="203.0" width="4.8" height="24.4" fill="#1c8ee6" opacity="0.82"/><rect x="402.3" y="178.9" width="4.8" height="24.4" fill="#114ae6" opacity="0.82"/><rect x="402.3" y="154.8" width="4.8" height="24.4" fill="#114ae6" opacity="0.82"/><rect x="378.4" y="276.5" width="4.8" height="24.4" fill="#2ce424" opacity="0.82"/><rect x="378.4" y="252.4" width="4.8" height="24.4" fill="#22dca0" opacity="0.82"/><rect x="378.4" y="228.3" width="4.8" height="24.4" fill="#1c8ee6" opacity="0.82"/><rect x="378.4" y="204.2" width="4.8" height="24.4" fill="#1c8ee6" opacity="0.82"/><rect x="378.4" y="180.1" width="4.8" height="24.4" fill="#114ae6" opacity="0.82"/><rect x="378.4" y="156.0" width="4.8" height="24.4" fill="#114ae6" opacity="0.82"/><path d="M388.6 304.7L369.6 294.6L369.6 270.5L388.6 280.6z" fill="#9cf02c" opacity="0.8"/><path d="M369.6 294.6L386.8 293.8L386.8 269.7L369.6 270.5z" fill="#2ce424" opacity="0.7"/><path d="M388.6 280.6L369.6 270.5L369.6 246.4L388.6 256.5z" fill="#2ce424" opacity="0.8"/><path d="M369.6 270.5L386.8 269.7L386.8 245.6L369.6 246.4z" fill="#2ce424" opacity="0.7"/><path d="M388.6 256.5L369.6 246.4L369.6 222.3L388.6 232.4z" fill="#22dca0" opacity="0.8"/><path d="M369.6 246.4L386.8 245.6L386.8 221.5L369.6 222.3z" fill="#22dca0" opacity="0.7"/><path d="M388.6 232.4L369.6 222.3L369.6 198.2L388.6 208.3z" fill="#1c8ee6" opacity="0.8"/><path d="M369.6 222.3L386.8 221.5L386.8 197.4L369.6 198.2z" fill="#1c8ee6" opacity="0.7"/><path d="M388.6 208.3L369.6 198.2L369.6 174.1L388.6 184.2z" fill="#1c8ee6" opacity="0.8"/><path d="M369.6 198.2L386.8 197.4L386.8 173.3L369.6 174.1z" fill="#114ae6" opacity="0.7"/><path d="M388.6 184.2L369.6 174.1L369.6 150.0L388.6 160.1z" fill="#114ae6" opacity="0.8"/><path d="M369.6 174.1L386.8 173.3L386.8 149.2L369.6 150.0z" fill="#114ae6" opacity="0.7"/><rect x="580.2" y="272.9" width="5.6" height="24.4" fill="#2ce424" opacity="0.95"/><rect x="580.2" y="248.8" width="5.6" height="24.4" fill="#22dca0" opacity="0.95"/><rect x="580.2" y="224.7" width="5.6" height="24.4" fill="#1c8ee6" opacity="0.95"/><rect x="580.2" y="200.6" width="5.6" height="24.4" fill="#1c8ee6" opacity="0.95"/><rect x="580.2" y="176.5" width="5.6" height="24.4" fill="#114ae6" opacity="0.95"/><rect x="580.2" y="152.4" width="5.6" height="24.4" fill="#114ae6" opacity="0.95"/><rect x="556.3" y="274.1" width="5.6" height="24.4" fill="#2ce424" opacity="0.95"/><rect x="556.3" y="250.0" width="5.6" height="24.4" fill="#22dca0" opacity="0.95"/><rect x="556.3" y="225.9" width="5.6" height="24.4" fill="#1c8ee6" opacity="0.95"/><rect x="556.3" y="201.8" width="5.6" height="24.4" fill="#1c8ee6" opacity="0.95"/><rect x="556.3" y="177.7" width="5.6" height="24.4" fill="#114ae6" opacity="0.95"/><rect x="556.3" y="153.6" width="5.6" height="24.4" fill="#114ae6" opacity="0.95"/><rect x="532.5" y="275.3" width="5.6" height="24.4" fill="#2ce424" opacity="0.95"/><rect x="532.5" y="251.2" width="5.6" height="24.4" fill="#22dca0" opacity="0.95"/><rect x="532.5" y="227.1" width="5.6" height="24.4" fill="#1c8ee6" opacity="0.95"/><rect x="532.5" y="203.0" width="5.6" height="24.4" fill="#1c8ee6" opacity="0.95"/><rect x="532.5" y="178.9" width="5.6" height="24.4" fill="#114ae6" opacity="0.95"/><rect x="532.5" y="154.8" width="5.6" height="24.4" fill="#114ae6" opacity="0.95"/><rect x="508.6" y="276.5" width="5.6" height="24.4" fill="#2ce424" opacity="0.95"/><rect x="508.6" y="252.4" width="5.6" height="24.4" fill="#22dca0" opacity="0.95"/><rect x="508.6" y="228.3" width="5.6" height="24.4" fill="#1c8ee6" opacity="0.95"/><rect x="508.6" y="204.2" width="5.6" height="24.4" fill="#1c8ee6" opacity="0.95"/><rect x="508.6" y="180.1" width="5.6" height="24.4" fill="#114ae6" opacity="0.95"/><rect x="508.6" y="156.0" width="5.6" height="24.4" fill="#114ae6" opacity="0.95"/><rect x="484.7" y="277.6" width="5.6" height="24.4" fill="#2ce424" opacity="0.95"/><rect x="484.7" y="253.6" width="5.6" height="24.4" fill="#22dca0" opacity="0.95"/><rect x="484.7" y="229.4" width="5.6" height="24.4" fill="#1c8ee6" opacity="0.95"/><rect x="484.7" y="205.3" width="5.6" height="24.4" fill="#1c8ee6" opacity="0.95"/><rect x="484.7" y="181.2" width="5.6" height="24.4" fill="#114ae6" opacity="0.95"/><rect x="484.7" y="157.1" width="5.6" height="24.4" fill="#114ae6" opacity="0.95"/><rect x="460.8" y="278.8" width="5.6" height="24.4" fill="#2ce424" opacity="0.95"/><rect x="460.8" y="254.7" width="5.6" height="24.4" fill="#22dca0" opacity="0.95"/><rect x="460.8" y="230.6" width="5.6" height="24.4" fill="#1c8ee6" opacity="0.95"/><rect x="460.8" y="206.5" width="5.6" height="24.4" fill="#1c8ee6" opacity="0.95"/><rect x="460.8" y="182.4" width="5.6" height="24.4" fill="#114ae6" opacity="0.95"/><rect x="460.8" y="158.3" width="5.6" height="24.4" fill="#114ae6" opacity="0.95"/><rect x="436.9" y="280.0" width="5.6" height="24.4" fill="#2ce424" opacity="0.95"/><rect x="436.9" y="255.9" width="5.6" height="24.4" fill="#22dca0" opacity="0.95"/><rect x="436.9" y="231.8" width="5.6" height="24.4" fill="#1c8ee6" opacity="0.95"/><rect x="436.9" y="207.7" width="5.6" height="24.4" fill="#1c8ee6" opacity="0.95"/><rect x="436.9" y="183.6" width="5.6" height="24.4" fill="#114ae6" opacity="0.95"/><rect x="436.9" y="159.5" width="5.6" height="24.4" fill="#114ae6" opacity="0.95"/><rect x="413.1" y="281.2" width="5.6" height="24.4" fill="#2ce424" opacity="0.95"/><rect x="413.1" y="257.1" width="5.6" height="24.4" fill="#22dca0" opacity="0.95"/><rect x="413.1" y="233.0" width="5.6" height="24.4" fill="#1c8ee6" opacity="0.95"/><rect x="413.1" y="208.9" width="5.6" height="24.4" fill="#1c8ee6" opacity="0.95"/><rect x="413.1" y="184.8" width="5.6" height="24.4" fill="#114ae6" opacity="0.95"/><rect x="413.1" y="160.7" width="5.6" height="24.4" fill="#114ae6" opacity="0.95"/><rect x="389.2" y="282.4" width="5.6" height="24.4" fill="#22dca0" opacity="0.95"/><rect x="389.2" y="258.3" width="5.6" height="24.4" fill="#22dca0" opacity="0.95"/><rect x="389.2" y="234.2" width="5.6" height="24.4" fill="#1c8ee6" opacity="0.95"/><rect x="389.2" y="210.1" width="5.6" height="24.4" fill="#1c8ee6" opacity="0.95"/><rect x="389.2" y="186.0" width="5.6" height="24.4" fill="#114ae6" opacity="0.95"/><rect x="389.2" y="161.9" width="5.6" height="24.4" fill="#114ae6" opacity="0.95"/><path d="M392.0 282.4L583.0 272.9" stroke="#858585" stroke-width="1.6" opacity="0.55"/><path d="M392.0 282.4L358.0 264.4" stroke="#858585" stroke-width="1.6" opacity="0.55"/><path d="M583.0 272.9L549.0 254.9" stroke="#858585" stroke-width="1.6" opacity="0.55"/><path d="M392.0 258.3L583.0 248.8" stroke="#858585" stroke-width="1.6" opacity="0.55"/><path d="M392.0 258.3L358.0 240.3" stroke="#858585" stroke-width="1.6" opacity="0.55"/><path d="M583.0 248.8L549.0 230.8" stroke="#858585" stroke-width="1.6" opacity="0.55"/><path d="M392.0 234.2L583.0 224.7" stroke="#858585" stroke-width="1.6" opacity="0.55"/><path d="M392.0 234.2L358.0 216.2" stroke="#858585" stroke-width="1.6" opacity="0.55"/><path d="M583.0 224.7L549.0 206.7" stroke="#858585" stroke-width="1.6" opacity="0.55"/><path d="M392.0 210.1L583.0 200.6" stroke="#858585" stroke-width="1.6" opacity="0.55"/><path d="M392.0 210.1L358.0 192.1" stroke="#858585" stroke-width="1.6" opacity="0.55"/><path d="M583.0 200.6L549.0 182.6" stroke="#858585" stroke-width="1.6" opacity="0.55"/><path d="M392.0 186.0L583.0 176.5" stroke="#858585" stroke-width="1.6" opacity="0.55"/><path d="M392.0 186.0L358.0 168.0" stroke="#858585" stroke-width="1.6" opacity="0.55"/><path d="M583.0 176.5L549.0 158.5" stroke="#858585" stroke-width="1.6" opacity="0.55"/><path d="M392.0 161.9L583.0 152.4" stroke="#858585" stroke-width="1.6" opacity="0.55"/><path d="M392.0 161.9L358.0 143.9" stroke="#858585" stroke-width="1.6" opacity="0.55"/><path d="M583.0 152.4L549.0 134.4" stroke="#858585" stroke-width="1.6" opacity="0.55"/></svg><span class="t" style="left:178px;top:318px;font-size:5.300px;color:#333">Ανηγμένες Αξονικές Δυνάμεις Υποστυλωμάτων</span><div class="a" style="left:177.4px;top:325.500px;width:52.600px;height:11px;background:#0a3cf0"></div><span class="t" style="left:179.4px;top:330px;font-size:5.900px;color:#223">0.00</span><div class="a" style="left:229.9px;top:325.500px;width:52.600px;height:11px;background:#1e96ff"></div><span class="t" style="left:231.9px;top:330px;font-size:5.900px;color:#223">0.10</span><div class="a" style="left:282.4px;top:325.500px;width:52.600px;height:11px;background:linear-gradient(90deg,#00e6b4,#00e65a)"></div><span class="t" style="left:284.4px;top:330px;font-size:5.900px;color:#223">0.20</span><div class="a" style="left:334.9px;top:325.500px;width:52.600px;height:11px;background:linear-gradient(90deg,#1edc28,#3cdc00)"></div><span class="t" style="left:336.9px;top:330px;font-size:5.900px;color:#223">0.30</span><div class="a" style="left:387.4px;top:325.500px;width:52.600px;height:11px;background:linear-gradient(90deg,#5ae600,#b4f000)"></div><span class="t" style="left:389.4px;top:330px;font-size:5.900px;color:#223">0.40</span><div class="a" style="left:439.9px;top:325.500px;width:52.600px;height:11px;background:linear-gradient(90deg,#c8f000,#fff000)"></div><span class="t" style="left:441.9px;top:330px;font-size:5.900px;color:#223">0.50</span><div class="a" style="left:492.4px;top:325.500px;width:52.600px;height:11px;background:linear-gradient(90deg,#fff000,#ffe100)"></div><span class="t" style="left:494.4px;top:330px;font-size:5.900px;color:#223">0.60</span><div class="a" style="left:544.9px;top:325.500px;width:52.600px;height:11px;background:linear-gradient(90deg,#ffcd00,#ffb400)"></div><span class="t" style="left:546.9px;top:330px;font-size:5.900px;color:#223">0.70</span><div class="a" style="left:597.4px;top:325.500px;width:52.600px;height:11px;background:#ff8c00"></div><span class="t" style="left:599.4px;top:330px;font-size:5.900px;color:#223">0.80</span><div class="a" style="left:649.9px;top:325.500px;width:52.600px;height:11px;background:#ff1478"></div><span class="t" style="left:651.9px;top:330px;font-size:5.900px;color:#223">0.90</span><div class="a" style="left:702.4px;top:325.500px;width:52.600px;height:11px;background:#ff0000"></div><span class="t" style="left:704.4px;top:330px;font-size:5.900px;color:#223">1.00</span><span class="t" style="left:759px;top:329.500px;font-size:5.900px;color:#333">μη ελεγμένα</span><div class="a" style="left:176px;top:336px;width:632px;height:241.500px;background:#f0f0f0;border:2.600px solid #d01818"></div><span class="t" style="left:179.500px;top:348.500px;font-size:11.400px;color:#3e78bd;letter-spacing:-.12px">Παράθυρο Εργασίας 1</span><span class="t" style="left:781.500px;top:351px;font-size:5px;color:#666">▾</span><span class="t" style="left:792px;top:350px;font-size:5px;color:#777">▮</span><span class="t" style="left:800px;top:349.500px;font-size:6.500px;color:#777">×</span><div class="a" style="left:218.3px;top:365.500px;width:39.5px;height:9.500px;background:#d2d2d2"></div><div class="a" style="left:280.5px;top:365.500px;width:121.5px;height:9.500px;background:#d2d2d2"></div><div class="a" style="left:408.5px;top:365.500px;width:46.5px;height:9.500px;background:#d2d2d2"></div><div class="a" style="left:629px;top:365.500px;width:95.5px;height:9.500px;background:#d2d2d2"></div><span class="t" style="left:183px;top:367px;font-size:6.500px;color:#555;letter-spacing:-0.1px">Επιλεγμένα</span><span class="t" style="left:220px;top:367px;font-size:6.500px;color:#555;letter-spacing:-0.1px">Εικονιζόμενα</span><span class="t" style="left:261px;top:367px;font-size:6.500px;color:#555;letter-spacing:-0.1px">Όλα</span><span class="t" style="left:291.5px;top:367px;font-size:6.500px;color:#555;letter-spacing:0.11px">Χρώματα Αξιολόγησης Μορφολογίας</span><span class="t" style="left:419px;top:367px;font-size:6.500px;color:#555;letter-spacing:-0.1px">Κλίμακα 0-1</span><span class="t" style="left:468.5px;top:367px;font-size:6.500px;color:#555;letter-spacing:-0.1px">Κλίμακα min-max</span><span class="t" style="left:528px;top:367px;font-size:6.500px;color:#555;letter-spacing:-0.1px">ΠΦ-ΣΦ</span><span class="t" style="left:563px;top:367px;font-size:6.500px;color:#555;letter-spacing:-0.1px">Δυσμενέστερα ΠΦ-ΣΦ</span><span class="t" style="left:640.5px;top:367px;font-size:6.500px;color:#555;letter-spacing:-0.1px">Δυσμενέστερα Σεισμικών ΣΦ</span><svg class="a" style="left:281.500px;top:366px" width="9" height="9" viewBox="0 0 9 9"><rect x=".3" y=".3" width="8.400" height="8.400" fill="#333"/><rect x="1.500" y="4" width="1.800" height="3.500" fill="#fff"/><rect x="4" y="2" width="1.800" height="5.500" fill="#7c7"/><rect x="6.300" y="4.800" width="1.500" height="2.700" fill="#fff"/></svg><svg class="a" style="left:410px;top:366.500px" width="8" height="8" viewBox="0 0 8 8"><path d="M.5 7.500h7M1.500 7V4.500h2V7M4.500 7V2h2v5" fill="none" stroke="#444" stroke-width=".9"/></svg><svg class="a" style="left:459px;top:366.500px" width="8" height="8" viewBox="0 0 8 8"><path d="M.5 7.500h7" stroke="#444" stroke-width=".9"/><rect x="1" y="3" width="2" height="4" fill="#c33"/><rect x="4.500" y="1" width="2" height="6" fill="#36c"/></svg><span class="t" style="left:554.500px;top:367px;font-size:6.500px;font-weight:bold;color:#222">W</span><span class="t" style="left:631px;top:367px;font-size:6.500px;font-weight:bold;color:#222">W</span><span class="t" style="left:636.500px;top:370.500px;font-size:4px;font-weight:bold;color:#222">E</span><div class="a" style="left:178.600px;top:377px;width:627px;height:1px;background:#b9b9b9"></div><style>.hc{position:absolute;background:#f6f6f6;border-right:.7px solid #5a5a5a;border-bottom:.7px solid #5a5a5a;font-size:6.600px;color:#222;text-align:center;white-space:nowrap;overflow:hidden}.dc{position:absolute;font-size:6.300px;line-height:8.570px;color:#04106a;white-space:nowrap;overflow:hidden;border-right:.6px solid rgba(70,95,170,.55);height:8.570px}</style><div class="hc" style="left:178.6px;top:378px;width:366.79999999999995px;height:10.200px;line-height:9.500px;border-right:none;background:#f3f3f3;font-size:6.900px;letter-spacing:0">Μέγεθος και Κατανομή Αξονικών Δυνάμεων Κατακόρυφων Στοιχείων</div><div class="a" style="left:178.6px;top:388.200px;width:366.79999999999995px;height:31.600px;background:#fafafa;border-top:.7px solid #5a5a5a"></div><div class="hc" style="left:178.6px;top:388.2px;width:16.700000000000017px;height:31.6px;line-height:31.5px">α/α</div><div class="hc" style="left:195.3px;top:388.2px;width:26.399999999999977px;height:20.8px;line-height:20.0px">Στοιχείο</div><div class="hc" style="left:195.3px;top:409px;width:26.399999999999977px;height:10.8px;line-height:10.0px"></div><div class="hc" style="left:221.7px;top:388.2px;width:53.900000000000034px;height:20.8px;line-height:20.0px">LC</div><div class="hc" style="left:221.7px;top:409px;width:53.900000000000034px;height:10.8px;line-height:10.0px"></div><div class="hc" style="left:391.7px;top:388.2px;width:53.80000000000001px;height:20.8px;line-height:20.0px">vd=NEd/(Ac·fcd)</div><div class="hc" style="left:391.7px;top:409px;width:53.80000000000001px;height:10.8px;line-height:10.0px"></div><div class="hc" style="left:445.5px;top:388.2px;width:50.0px;height:20.8px;line-height:20.0px">απ.vd</div><div class="hc" style="left:445.5px;top:409px;width:50.0px;height:10.8px;line-height:10.0px"></div><div class="hc" style="left:495.5px;top:388.2px;width:49.89999999999998px;height:20.8px;line-height:20.0px">CR=vd/απ.vd</div><div class="hc" style="left:495.5px;top:409px;width:49.89999999999998px;height:10.8px;line-height:10.0px">▲</div><div class="hc" style="left:275.6px;top:388.2px;width:38.0px;height:10.2px;line-height:9.4px">NEd</div><div class="hc" style="left:275.6px;top:398.4px;width:38.0px;height:10.6px;line-height:9.8px">kN</div><div class="hc" style="left:275.6px;top:409px;width:38.0px;height:10.8px;line-height:10.0px"></div><div class="hc" style="left:313.6px;top:388.2px;width:36.099999999999966px;height:10.2px;line-height:9.4px">A</div><div class="hc" style="left:313.6px;top:398.4px;width:36.099999999999966px;height:10.6px;line-height:9.8px">m²</div><div class="hc" style="left:313.6px;top:409px;width:36.099999999999966px;height:10.8px;line-height:10.0px"></div><div class="hc" style="left:349.7px;top:388.2px;width:42.0px;height:10.2px;line-height:9.4px">fcd</div><div class="hc" style="left:349.7px;top:398.4px;width:42.0px;height:10.6px;line-height:9.8px">kN/m²</div><div class="hc" style="left:349.7px;top:409px;width:42.0px;height:10.8px;line-height:10.0px"></div><div class="a" style="left:195.3px;top:419.8px;width:350.09999999999997px;height:154.3px;background:#0d50ea"></div><div class="hc" style="left:178.6px;top:419.80px;width:16.700000000000017px;height:8.57px;line-height:8.07px;text-align:right;background:#fff;padding-right:.5px;color:#222">0</div><div class="dc" style="left:195.3px;top:419.80px;width:26.399999999999977px;text-align:left;padding:0 2.500px 0 1.800px">Υ1-Ι6</div><div class="dc" style="left:221.7px;top:419.80px;width:53.900000000000034px;text-align:left;padding:0 2.500px 0 1.800px">G+φ2·Q-E2</div><div class="dc" style="left:275.6px;top:419.80px;width:38.0px;text-align:right;padding:0 2.500px 0 1.800px">-279.42</div><div class="dc" style="left:313.6px;top:419.80px;width:36.099999999999966px;text-align:right;padding:0 2.500px 0 1.800px">0.442</div><div class="dc" style="left:349.7px;top:419.80px;width:42.0px;text-align:right;padding:0 2.500px 0 1.800px">33333.33</div><div class="dc" style="left:391.7px;top:419.80px;width:53.80000000000001px;text-align:right;padding:0 2.500px 0 1.800px">0.0190</div><div class="dc" style="left:445.5px;top:419.80px;width:50.0px;text-align:right;padding:0 2.500px 0 1.800px">0.6500</div><div class="dc" style="left:495.5px;top:419.80px;width:49.89999999999998px;text-align:right;padding:0 2.500px 0 1.800px">0.03</div><div class="hc" style="left:178.6px;top:428.37px;width:16.700000000000017px;height:8.57px;line-height:8.07px;text-align:right;background:#fff;padding-right:.5px;color:#222">1</div><div class="dc" style="left:195.3px;top:428.37px;width:26.399999999999977px;text-align:left;padding:0 2.500px 0 1.800px">Υ16-Ι6</div><div class="dc" style="left:221.7px;top:428.37px;width:53.900000000000034px;text-align:left;padding:0 2.500px 0 1.800px">G+φ2·Q-E3</div><div class="dc" style="left:275.6px;top:428.37px;width:38.0px;text-align:right;padding:0 2.500px 0 1.800px">-284.82</div><div class="dc" style="left:313.6px;top:428.37px;width:36.099999999999966px;text-align:right;padding:0 2.500px 0 1.800px">0.442</div><div class="dc" style="left:349.7px;top:428.37px;width:42.0px;text-align:right;padding:0 2.500px 0 1.800px">33333.33</div><div class="dc" style="left:391.7px;top:428.37px;width:53.80000000000001px;text-align:right;padding:0 2.500px 0 1.800px">0.0193</div><div class="dc" style="left:445.5px;top:428.37px;width:50.0px;text-align:right;padding:0 2.500px 0 1.800px">0.6500</div><div class="dc" style="left:495.5px;top:428.37px;width:49.89999999999998px;text-align:right;padding:0 2.500px 0 1.800px">0.03</div><div class="a" style="left:195.3px;top:428.07px;width:350.09999999999997px;height:.6px;background:rgba(70,95,170,.6)"></div><div class="hc" style="left:178.6px;top:436.94px;width:16.700000000000017px;height:8.57px;line-height:8.07px;text-align:right;background:#fff;padding-right:.5px;color:#222">2</div><div class="dc" style="left:195.3px;top:436.94px;width:26.399999999999977px;text-align:left;padding:0 2.500px 0 1.800px">Υ24-Ι6</div><div class="dc" style="left:221.7px;top:436.94px;width:53.900000000000034px;text-align:left;padding:0 2.500px 0 1.800px">G+φ2·Q-E3</div><div class="dc" style="left:275.6px;top:436.94px;width:38.0px;text-align:right;padding:0 2.500px 0 1.800px">-308.88</div><div class="dc" style="left:313.6px;top:436.94px;width:36.099999999999966px;text-align:right;padding:0 2.500px 0 1.800px">0.442</div><div class="dc" style="left:349.7px;top:436.94px;width:42.0px;text-align:right;padding:0 2.500px 0 1.800px">33333.33</div><div class="dc" style="left:391.7px;top:436.94px;width:53.80000000000001px;text-align:right;padding:0 2.500px 0 1.800px">0.0210</div><div class="dc" style="left:445.5px;top:436.94px;width:50.0px;text-align:right;padding:0 2.500px 0 1.800px">0.6500</div><div class="dc" style="left:495.5px;top:436.94px;width:49.89999999999998px;text-align:right;padding:0 2.500px 0 1.800px">0.03</div><div class="a" style="left:195.3px;top:436.64px;width:350.09999999999997px;height:.6px;background:rgba(70,95,170,.6)"></div><div class="hc" style="left:178.6px;top:445.51px;width:16.700000000000017px;height:8.57px;line-height:8.07px;text-align:right;background:#fff;padding-right:.5px;color:#222">3</div><div class="dc" style="left:195.3px;top:445.51px;width:26.399999999999977px;text-align:left;padding:0 2.500px 0 1.800px">Υ15-Ι6</div><div class="dc" style="left:221.7px;top:445.51px;width:53.900000000000034px;text-align:left;padding:0 2.500px 0 1.800px">G+φ2·Q-E2</div><div class="dc" style="left:275.6px;top:445.51px;width:38.0px;text-align:right;padding:0 2.500px 0 1.800px">-331.32</div><div class="dc" style="left:313.6px;top:445.51px;width:36.099999999999966px;text-align:right;padding:0 2.500px 0 1.800px">0.442</div><div class="dc" style="left:349.7px;top:445.51px;width:42.0px;text-align:right;padding:0 2.500px 0 1.800px">33333.33</div><div class="dc" style="left:391.7px;top:445.51px;width:53.80000000000001px;text-align:right;padding:0 2.500px 0 1.800px">0.0225</div><div class="dc" style="left:445.5px;top:445.51px;width:50.0px;text-align:right;padding:0 2.500px 0 1.800px">0.6500</div><div class="dc" style="left:495.5px;top:445.51px;width:49.89999999999998px;text-align:right;padding:0 2.500px 0 1.800px">0.03</div><div class="a" style="left:195.3px;top:445.21px;width:350.09999999999997px;height:.6px;background:rgba(70,95,170,.6)"></div><div class="hc" style="left:178.6px;top:454.08px;width:16.700000000000017px;height:8.57px;line-height:8.07px;text-align:right;background:#fff;padding-right:.5px;color:#222">4</div><div class="dc" style="left:195.3px;top:454.08px;width:26.399999999999977px;text-align:left;padding:0 2.500px 0 1.800px">Υ4-Ι6</div><div class="dc" style="left:221.7px;top:454.08px;width:53.900000000000034px;text-align:left;padding:0 2.500px 0 1.800px">G+φ2·Q-E1</div><div class="dc" style="left:275.6px;top:454.08px;width:38.0px;text-align:right;padding:0 2.500px 0 1.800px">-341.88</div><div class="dc" style="left:313.6px;top:454.08px;width:36.099999999999966px;text-align:right;padding:0 2.500px 0 1.800px">0.442</div><div class="dc" style="left:349.7px;top:454.08px;width:42.0px;text-align:right;padding:0 2.500px 0 1.800px">33333.33</div><div class="dc" style="left:391.7px;top:454.08px;width:53.80000000000001px;text-align:right;padding:0 2.500px 0 1.800px">0.0232</div><div class="dc" style="left:445.5px;top:454.08px;width:50.0px;text-align:right;padding:0 2.500px 0 1.800px">0.6500</div><div class="dc" style="left:495.5px;top:454.08px;width:49.89999999999998px;text-align:right;padding:0 2.500px 0 1.800px">0.04</div><div class="a" style="left:195.3px;top:453.78px;width:350.09999999999997px;height:.6px;background:rgba(70,95,170,.6)"></div><div class="hc" style="left:178.6px;top:462.65px;width:16.700000000000017px;height:8.57px;line-height:8.07px;text-align:right;background:#fff;padding-right:.5px;color:#222">5</div><div class="dc" style="left:195.3px;top:462.65px;width:26.399999999999977px;text-align:left;padding:0 2.500px 0 1.800px">Υ25-Ι6</div><div class="dc" style="left:221.7px;top:462.65px;width:53.900000000000034px;text-align:left;padding:0 2.500px 0 1.800px">G+φ2·Q-E2</div><div class="dc" style="left:275.6px;top:462.65px;width:38.0px;text-align:right;padding:0 2.500px 0 1.800px">-343.24</div><div class="dc" style="left:313.6px;top:462.65px;width:36.099999999999966px;text-align:right;padding:0 2.500px 0 1.800px">0.442</div><div class="dc" style="left:349.7px;top:462.65px;width:42.0px;text-align:right;padding:0 2.500px 0 1.800px">33333.33</div><div class="dc" style="left:391.7px;top:462.65px;width:53.80000000000001px;text-align:right;padding:0 2.500px 0 1.800px">0.0233</div><div class="dc" style="left:445.5px;top:462.65px;width:50.0px;text-align:right;padding:0 2.500px 0 1.800px">0.6500</div><div class="dc" style="left:495.5px;top:462.65px;width:49.89999999999998px;text-align:right;padding:0 2.500px 0 1.800px">0.04</div><div class="a" style="left:195.3px;top:462.35px;width:350.09999999999997px;height:.6px;background:rgba(70,95,170,.6)"></div><div class="hc" style="left:178.6px;top:471.22px;width:16.700000000000017px;height:8.57px;line-height:8.07px;text-align:right;background:#fff;padding-right:.5px;color:#222">6</div><div class="dc" style="left:195.3px;top:471.22px;width:26.399999999999977px;text-align:left;padding:0 2.500px 0 1.800px">Υ34-Ι6</div><div class="dc" style="left:221.7px;top:471.22px;width:53.900000000000034px;text-align:left;padding:0 2.500px 0 1.800px">G+φ2·Q-E3</div><div class="dc" style="left:275.6px;top:471.22px;width:38.0px;text-align:right;padding:0 2.500px 0 1.800px">-446.41</div><div class="dc" style="left:313.6px;top:471.22px;width:36.099999999999966px;text-align:right;padding:0 2.500px 0 1.800px">0.570</div><div class="dc" style="left:349.7px;top:471.22px;width:42.0px;text-align:right;padding:0 2.500px 0 1.800px">33333.33</div><div class="dc" style="left:391.7px;top:471.22px;width:53.80000000000001px;text-align:right;padding:0 2.500px 0 1.800px">0.0235</div><div class="dc" style="left:445.5px;top:471.22px;width:50.0px;text-align:right;padding:0 2.500px 0 1.800px">0.6500</div><div class="dc" style="left:495.5px;top:471.22px;width:49.89999999999998px;text-align:right;padding:0 2.500px 0 1.800px">0.04</div><div class="a" style="left:195.3px;top:470.92px;width:350.09999999999997px;height:.6px;background:rgba(70,95,170,.6)"></div><div class="hc" style="left:178.6px;top:479.79px;width:16.700000000000017px;height:8.57px;line-height:8.07px;text-align:right;background:#fff;padding-right:.5px;color:#222">7</div><div class="dc" style="left:195.3px;top:479.79px;width:26.399999999999977px;text-align:left;padding:0 2.500px 0 1.800px">Υ3-Ι6</div><div class="dc" style="left:221.7px;top:479.79px;width:53.900000000000034px;text-align:left;padding:0 2.500px 0 1.800px">G+φ2·Q-E1</div><div class="dc" style="left:275.6px;top:479.79px;width:38.0px;text-align:right;padding:0 2.500px 0 1.800px">-346.33</div><div class="dc" style="left:313.6px;top:479.79px;width:36.099999999999966px;text-align:right;padding:0 2.500px 0 1.800px">0.442</div><div class="dc" style="left:349.7px;top:479.79px;width:42.0px;text-align:right;padding:0 2.500px 0 1.800px">33333.33</div><div class="dc" style="left:391.7px;top:479.79px;width:53.80000000000001px;text-align:right;padding:0 2.500px 0 1.800px">0.0235</div><div class="dc" style="left:445.5px;top:479.79px;width:50.0px;text-align:right;padding:0 2.500px 0 1.800px">0.6500</div><div class="dc" style="left:495.5px;top:479.79px;width:49.89999999999998px;text-align:right;padding:0 2.500px 0 1.800px">0.04</div><div class="a" style="left:195.3px;top:479.49px;width:350.09999999999997px;height:.6px;background:rgba(70,95,170,.6)"></div><div class="hc" style="left:178.6px;top:488.36px;width:16.700000000000017px;height:8.57px;line-height:8.07px;text-align:right;background:#fff;padding-right:.5px;color:#222">8</div><div class="dc" style="left:195.3px;top:488.36px;width:26.399999999999977px;text-align:left;padding:0 2.500px 0 1.800px">Υ17-Ι6</div><div class="dc" style="left:221.7px;top:488.36px;width:53.900000000000034px;text-align:left;padding:0 2.500px 0 1.800px">G+φ2·Q-E3</div><div class="dc" style="left:275.6px;top:488.36px;width:38.0px;text-align:right;padding:0 2.500px 0 1.800px">-351.76</div><div class="dc" style="left:313.6px;top:488.36px;width:36.099999999999966px;text-align:right;padding:0 2.500px 0 1.800px">0.442</div><div class="dc" style="left:349.7px;top:488.36px;width:42.0px;text-align:right;padding:0 2.500px 0 1.800px">33333.33</div><div class="dc" style="left:391.7px;top:488.36px;width:53.80000000000001px;text-align:right;padding:0 2.500px 0 1.800px">0.0239</div><div class="dc" style="left:445.5px;top:488.36px;width:50.0px;text-align:right;padding:0 2.500px 0 1.800px">0.6500</div><div class="dc" style="left:495.5px;top:488.36px;width:49.89999999999998px;text-align:right;padding:0 2.500px 0 1.800px">0.04</div><div class="a" style="left:195.3px;top:488.06px;width:350.09999999999997px;height:.6px;background:rgba(70,95,170,.6)"></div><div class="hc" style="left:178.6px;top:496.93px;width:16.700000000000017px;height:8.57px;line-height:8.07px;text-align:right;background:#fff;padding-right:.5px;color:#222">9</div><div class="dc" style="left:195.3px;top:496.93px;width:26.399999999999977px;text-align:left;padding:0 2.500px 0 1.800px">Υ48-Ι6</div><div class="dc" style="left:221.7px;top:496.93px;width:53.900000000000034px;text-align:left;padding:0 2.500px 0 1.800px">G+φ2·Q-E3</div><div class="dc" style="left:275.6px;top:496.93px;width:38.0px;text-align:right;padding:0 2.500px 0 1.800px">-368.87</div><div class="dc" style="left:313.6px;top:496.93px;width:36.099999999999966px;text-align:right;padding:0 2.500px 0 1.800px">0.442</div><div class="dc" style="left:349.7px;top:496.93px;width:42.0px;text-align:right;padding:0 2.500px 0 1.800px">33333.33</div><div class="dc" style="left:391.7px;top:496.93px;width:53.80000000000001px;text-align:right;padding:0 2.500px 0 1.800px">0.0250</div><div class="dc" style="left:445.5px;top:496.93px;width:50.0px;text-align:right;padding:0 2.500px 0 1.800px">0.6500</div><div class="dc" style="left:495.5px;top:496.93px;width:49.89999999999998px;text-align:right;padding:0 2.500px 0 1.800px">0.04</div><div class="a" style="left:195.3px;top:496.63px;width:350.09999999999997px;height:.6px;background:rgba(70,95,170,.6)"></div><div class="hc" style="left:178.6px;top:505.50px;width:16.700000000000017px;height:8.57px;line-height:8.07px;text-align:right;background:#fff;padding-right:.5px;color:#222">10</div><div class="dc" style="left:195.3px;top:505.50px;width:26.399999999999977px;text-align:left;padding:0 2.500px 0 1.800px">Υ2-Ι6</div><div class="dc" style="left:221.7px;top:505.50px;width:53.900000000000034px;text-align:left;padding:0 2.500px 0 1.800px">G+φ2·Q-E1</div><div class="dc" style="left:275.6px;top:505.50px;width:38.0px;text-align:right;padding:0 2.500px 0 1.800px">-368.99</div><div class="dc" style="left:313.6px;top:505.50px;width:36.099999999999966px;text-align:right;padding:0 2.500px 0 1.800px">0.442</div><div class="dc" style="left:349.7px;top:505.50px;width:42.0px;text-align:right;padding:0 2.500px 0 1.800px">33333.33</div><div class="dc" style="left:391.7px;top:505.50px;width:53.80000000000001px;text-align:right;padding:0 2.500px 0 1.800px">0.0251</div><div class="dc" style="left:445.5px;top:505.50px;width:50.0px;text-align:right;padding:0 2.500px 0 1.800px">0.6500</div><div class="dc" style="left:495.5px;top:505.50px;width:49.89999999999998px;text-align:right;padding:0 2.500px 0 1.800px">0.04</div><div class="a" style="left:195.3px;top:505.20px;width:350.09999999999997px;height:.6px;background:rgba(70,95,170,.6)"></div><div class="hc" style="left:178.6px;top:514.07px;width:16.700000000000017px;height:8.57px;line-height:8.07px;text-align:right;background:#fff;padding-right:.5px;color:#222">11</div><div class="dc" style="left:195.3px;top:514.07px;width:26.399999999999977px;text-align:left;padding:0 2.500px 0 1.800px">Υ26-Ι6</div><div class="dc" style="left:221.7px;top:514.07px;width:53.900000000000034px;text-align:left;padding:0 2.500px 0 1.800px">G+φ2·Q-E2</div><div class="dc" style="left:275.6px;top:514.07px;width:38.0px;text-align:right;padding:0 2.500px 0 1.800px">-384.66</div><div class="dc" style="left:313.6px;top:514.07px;width:36.099999999999966px;text-align:right;padding:0 2.500px 0 1.800px">0.442</div><div class="dc" style="left:349.7px;top:514.07px;width:42.0px;text-align:right;padding:0 2.500px 0 1.800px">33333.33</div><div class="dc" style="left:391.7px;top:514.07px;width:53.80000000000001px;text-align:right;padding:0 2.500px 0 1.800px">0.0261</div><div class="dc" style="left:445.5px;top:514.07px;width:50.0px;text-align:right;padding:0 2.500px 0 1.800px">0.6500</div><div class="dc" style="left:495.5px;top:514.07px;width:49.89999999999998px;text-align:right;padding:0 2.500px 0 1.800px">0.04</div><div class="a" style="left:195.3px;top:513.77px;width:350.09999999999997px;height:.6px;background:rgba(70,95,170,.6)"></div><div class="hc" style="left:178.6px;top:522.64px;width:16.700000000000017px;height:8.57px;line-height:8.07px;text-align:right;background:#fff;padding-right:.5px;color:#222">12</div><div class="dc" style="left:195.3px;top:522.64px;width:26.399999999999977px;text-align:left;padding:0 2.500px 0 1.800px">Υ13-Ι6</div><div class="dc" style="left:221.7px;top:522.64px;width:53.900000000000034px;text-align:left;padding:0 2.500px 0 1.800px">G+φ2·Q-E2</div><div class="dc" style="left:275.6px;top:522.64px;width:38.0px;text-align:right;padding:0 2.500px 0 1.800px">-395.56</div><div class="dc" style="left:313.6px;top:522.64px;width:36.099999999999966px;text-align:right;padding:0 2.500px 0 1.800px">0.442</div><div class="dc" style="left:349.7px;top:522.64px;width:42.0px;text-align:right;padding:0 2.500px 0 1.800px">33333.33</div><div class="dc" style="left:391.7px;top:522.64px;width:53.80000000000001px;text-align:right;padding:0 2.500px 0 1.800px">0.0269</div><div class="dc" style="left:445.5px;top:522.64px;width:50.0px;text-align:right;padding:0 2.500px 0 1.800px">0.6500</div><div class="dc" style="left:495.5px;top:522.64px;width:49.89999999999998px;text-align:right;padding:0 2.500px 0 1.800px">0.04</div><div class="a" style="left:195.3px;top:522.34px;width:350.09999999999997px;height:.6px;background:rgba(70,95,170,.6)"></div><div class="hc" style="left:178.6px;top:531.21px;width:16.700000000000017px;height:8.57px;line-height:8.07px;text-align:right;background:#fff;padding-right:.5px;color:#222">13</div><div class="dc" style="left:195.3px;top:531.21px;width:26.399999999999977px;text-align:left;padding:0 2.500px 0 1.800px">Υ10-Ι6</div><div class="dc" style="left:221.7px;top:531.21px;width:53.900000000000034px;text-align:left;padding:0 2.500px 0 1.800px">G+φ2·Q-E1</div><div class="dc" style="left:275.6px;top:531.21px;width:38.0px;text-align:right;padding:0 2.500px 0 1.800px">-400.16</div><div class="dc" style="left:313.6px;top:531.21px;width:36.099999999999966px;text-align:right;padding:0 2.500px 0 1.800px">0.442</div><div class="dc" style="left:349.7px;top:531.21px;width:42.0px;text-align:right;padding:0 2.500px 0 1.800px">33333.33</div><div class="dc" style="left:391.7px;top:531.21px;width:53.80000000000001px;text-align:right;padding:0 2.500px 0 1.800px">0.0272</div><div class="dc" style="left:445.5px;top:531.21px;width:50.0px;text-align:right;padding:0 2.500px 0 1.800px">0.6500</div><div class="dc" style="left:495.5px;top:531.21px;width:49.89999999999998px;text-align:right;padding:0 2.500px 0 1.800px">0.04</div><div class="a" style="left:195.3px;top:530.91px;width:350.09999999999997px;height:.6px;background:rgba(70,95,170,.6)"></div><div class="hc" style="left:178.6px;top:539.78px;width:16.700000000000017px;height:8.57px;line-height:8.07px;text-align:right;background:#fff;padding-right:.5px;color:#222">14</div><div class="dc" style="left:195.3px;top:539.78px;width:26.399999999999977px;text-align:left;padding:0 2.500px 0 1.800px">Υ43-Ι6</div><div class="dc" style="left:221.7px;top:539.78px;width:53.900000000000034px;text-align:left;padding:0 2.500px 0 1.800px">G+φ2·Q-E3</div><div class="dc" style="left:275.6px;top:539.78px;width:38.0px;text-align:right;padding:0 2.500px 0 1.800px">-519.57</div><div class="dc" style="left:313.6px;top:539.78px;width:36.099999999999966px;text-align:right;padding:0 2.500px 0 1.800px">0.570</div><div class="dc" style="left:349.7px;top:539.78px;width:42.0px;text-align:right;padding:0 2.500px 0 1.800px">33333.33</div><div class="dc" style="left:391.7px;top:539.78px;width:53.80000000000001px;text-align:right;padding:0 2.500px 0 1.800px">0.0273</div><div class="dc" style="left:445.5px;top:539.78px;width:50.0px;text-align:right;padding:0 2.500px 0 1.800px">0.6500</div><div class="dc" style="left:495.5px;top:539.78px;width:49.89999999999998px;text-align:right;padding:0 2.500px 0 1.800px">0.04</div><div class="a" style="left:195.3px;top:539.48px;width:350.09999999999997px;height:.6px;background:rgba(70,95,170,.6)"></div><div class="hc" style="left:178.6px;top:548.35px;width:16.700000000000017px;height:8.57px;line-height:8.07px;text-align:right;background:#fff;padding-right:.5px;color:#222">15</div><div class="dc" style="left:195.3px;top:548.35px;width:26.399999999999977px;text-align:left;padding:0 2.500px 0 1.800px">Υ5-Ι6</div><div class="dc" style="left:221.7px;top:548.35px;width:53.900000000000034px;text-align:left;padding:0 2.500px 0 1.800px">G+φ2·Q-E1</div><div class="dc" style="left:275.6px;top:548.35px;width:38.0px;text-align:right;padding:0 2.500px 0 1.800px">-406.78</div><div class="dc" style="left:313.6px;top:548.35px;width:36.099999999999966px;text-align:right;padding:0 2.500px 0 1.800px">0.442</div><div class="dc" style="left:349.7px;top:548.35px;width:42.0px;text-align:right;padding:0 2.500px 0 1.800px">33333.33</div><div class="dc" style="left:391.7px;top:548.35px;width:53.80000000000001px;text-align:right;padding:0 2.500px 0 1.800px">0.0276</div><div class="dc" style="left:445.5px;top:548.35px;width:50.0px;text-align:right;padding:0 2.500px 0 1.800px">0.6500</div><div class="dc" style="left:495.5px;top:548.35px;width:49.89999999999998px;text-align:right;padding:0 2.500px 0 1.800px">0.04</div><div class="a" style="left:195.3px;top:548.05px;width:350.09999999999997px;height:.6px;background:rgba(70,95,170,.6)"></div><div class="hc" style="left:178.6px;top:556.92px;width:16.700000000000017px;height:8.57px;line-height:8.07px;text-align:right;background:#fff;padding-right:.5px;color:#222">16</div><div class="dc" style="left:195.3px;top:556.92px;width:26.399999999999977px;text-align:left;padding:0 2.500px 0 1.800px">Υ28-Ι6</div><div class="dc" style="left:221.7px;top:556.92px;width:53.900000000000034px;text-align:left;padding:0 2.500px 0 1.800px">G+φ2·Q-E2</div><div class="dc" style="left:275.6px;top:556.92px;width:38.0px;text-align:right;padding:0 2.500px 0 1.800px">-416.58</div><div class="dc" style="left:313.6px;top:556.92px;width:36.099999999999966px;text-align:right;padding:0 2.500px 0 1.800px">0.442</div><div class="dc" style="left:349.7px;top:556.92px;width:42.0px;text-align:right;padding:0 2.500px 0 1.800px">33333.33</div><div class="dc" style="left:391.7px;top:556.92px;width:53.80000000000001px;text-align:right;padding:0 2.500px 0 1.800px">0.0283</div><div class="dc" style="left:445.5px;top:556.92px;width:50.0px;text-align:right;padding:0 2.500px 0 1.800px">0.6500</div><div class="dc" style="left:495.5px;top:556.92px;width:49.89999999999998px;text-align:right;padding:0 2.500px 0 1.800px">0.04</div><div class="a" style="left:195.3px;top:556.62px;width:350.09999999999997px;height:.6px;background:rgba(70,95,170,.6)"></div><div class="hc" style="left:178.6px;top:565.49px;width:16.700000000000017px;height:8.57px;line-height:8.07px;text-align:right;background:#fff;padding-right:.5px;color:#222">17</div><div class="dc" style="left:195.3px;top:565.49px;width:26.399999999999977px;text-align:left;padding:0 2.500px 0 1.800px">Υ9-Ι6</div><div class="dc" style="left:221.7px;top:565.49px;width:53.900000000000034px;text-align:left;padding:0 2.500px 0 1.800px">G+φ2·Q-E3</div><div class="dc" style="left:275.6px;top:565.49px;width:38.0px;text-align:right;padding:0 2.500px 0 1.800px">-422.20</div><div class="dc" style="left:313.6px;top:565.49px;width:36.099999999999966px;text-align:right;padding:0 2.500px 0 1.800px">0.442</div><div class="dc" style="left:349.7px;top:565.49px;width:42.0px;text-align:right;padding:0 2.500px 0 1.800px">33333.33</div><div class="dc" style="left:391.7px;top:565.49px;width:53.80000000000001px;text-align:right;padding:0 2.500px 0 1.800px">0.0287</div><div class="dc" style="left:445.5px;top:565.49px;width:50.0px;text-align:right;padding:0 2.500px 0 1.800px">0.6500</div><div class="dc" style="left:495.5px;top:565.49px;width:49.89999999999998px;text-align:right;padding:0 2.500px 0 1.800px">0.04</div><div class="a" style="left:195.3px;top:565.19px;width:350.09999999999997px;height:.6px;background:rgba(70,95,170,.6)"></div><div class="a" style="left:803.500px;top:383px;width:1.800px;height:18px;background:#555"></div><svg class="a" style="left:730px;top:215px" width="50" height="160" viewBox="730 215 50 160"><path d="M758 224.500L762 224.500L755.300 353L758.700 352L749.500 367L741.800 352L750.200 353.500z" fill="#e01414" stroke="#e01414" stroke-width="1" stroke-linejoin="round"/></svg><div class="a" style="left:176px;top:578.500px;width:635px;height:11.500px;background:#e9e9e9"></div><div class="a" style="left:231px;top:578.500px;width:76.500px;height:11px;background:#fff"></div><div class="a" style="left:180.500px;top:580px;width:6px;height:7px;border:.8px solid #665;background:#fff"></div><span class="t" style="left:189px;top:580.500px;font-size:6.500px;color:#555">Εμφ. Αποτελ.</span><svg class="a" style="left:232.5px;top:579.500px" width="8" height="9" viewBox="0 0 8 9"><rect x=".4" y=".4" width="6.800" height="6" fill="#fff" stroke="#9ab" stroke-width=".6"/><rect x=".4" y=".4" width="6.800" height="1.500" fill="#9ab4d8"/><rect x="5" y="4" width="1.600" height="4.500" fill="#c33"/></svg><span class="t" style="left:242px;top:580.500px;font-size:6.500px;color:#444">Παράθυρο Εργασίας 1</span><svg class="a" style="left:311.500px;top:580px" width="8" height="8" viewBox="0 0 8 8"><path d="M.5 4l3.500-3.500 3.500 3.500v3.500h-7z" fill="#fff" stroke="#c90" stroke-width=".7"/><circle cx="4" cy="4.800" r="1.300" fill="#4a4"/></svg><span class="t" style="left:321px;top:580.500px;font-size:6.500px;color:#555">Βοήθεια</span><svg class="a" style="left:349.5px;top:579.500px" width="8" height="9" viewBox="0 0 8 9"><rect x=".4" y=".4" width="6.800" height="6" fill="#fff" stroke="#9ab" stroke-width=".6"/><rect x=".4" y=".4" width="6.800" height="1.500" fill="#9ab4d8"/><rect x="5" y="4" width="1.600" height="4.500" fill="#c33"/></svg><span class="t" style="left:359px;top:580.500px;font-size:6.500px;color:#555">Παράθυρο Εργασίας 2</span><div class="a" style="left:811px;top:72px;width:213px;height:518px;background:#f0f0f0"></div><div class="a" style="left:811.500px;top:72.500px;width:213px;height:20px;background:#e8e8e8"></div><span class="t ptitle" style="left:816px;top:78.500px">Ανάλυση</span><span class="t" style="left:1017.500px;top:76px;font-size:4.500px;color:#666">▾</span><span class="t" style="left:821px;top:98.500px;font-size:6.300px;color:#555">Φάσμα:</span><div class="combo d" style="left:846px;top:96px;width:51.500px;height:11px;background:#e9e9e9"></div><span class="t" style="left:848.500px;top:98.500px;font-size:6.300px;color:#a4a4a4">Ευρωκώδικες</span><span class="t" style="left:891px;top:99.500px;font-size:4.500px;color:#b5b5b5">▾</span><svg class="a" style="left:0;top:0" width="1024" height="120" viewBox="0 0 1024 120"><path d="M906 101.500h8M910 97.500v8" stroke="#7cb82a" stroke-width="2.400"/><path d="M917.500 98l6.500 7M924 98l-6.500 7" stroke="#f0a090" stroke-width="1.200"/><path d="M932.500 98.500h3.500l1 1.200h4.500v6h-9z" fill="#f0cc5a" stroke="#c9a030" stroke-width=".5"/><rect x="944.500" y="97.500" width="8" height="8" rx=".8" fill="#8a5cc0"/><rect x="946" y="97.500" width="5" height="3" fill="#e8e0f4"/><rect x="946.500" y="102.500" width="4" height="3" fill="#d8c8ec"/><rect x="956.500" y="98" width="7.500" height="7.500" fill="#e4ecf8" stroke="#7a94c0" stroke-width=".6"/><path d="M958 103.500l4.500-5 1.200 1-4.500 5z" fill="#d05030"/><rect x="988.500" y="97.500" width="5.500" height="5.500" fill="#e4ecf8" stroke="#6a8ac8" stroke-width=".6"/><rect x="991" y="100" width="5.500" height="5.500" fill="#c8d8f4" stroke="#6a8ac8" stroke-width=".6"/><rect x="999.500" y="97.500" width="8" height="8" rx=".8" fill="#8a5cc0"/><rect x="1001" y="97.500" width="5" height="3" fill="#e8e0f4"/><rect x="1001.500" y="102.500" width="4" height="3" fill="#d8c8ec"/></svg><span class="t" style="left:973.500px;top:98.500px;font-size:6px;color:#444">Rd</span><div class="a" style="left:814px;top:110.500px;width:210px;height:157px;background:#fff"></div><svg class="a" style="left:0;top:0;font-family:'Liberation Sans',sans-serif" width="1024" height="280" viewBox="0 0 1024 280"><path d="M852.0 124.3V231.5" stroke="#e6e6e6" stroke-width=".5"/><path d="M870.6 124.3V231.5" stroke="#e6e6e6" stroke-width=".5"/><path d="M889.1 124.3V231.5" stroke="#e6e6e6" stroke-width=".5"/><path d="M907.7 124.3V231.5" stroke="#e6e6e6" stroke-width=".5"/><path d="M926.3 124.3V231.5" stroke="#e6e6e6" stroke-width=".5"/><path d="M944.9 124.3V231.5" stroke="#e6e6e6" stroke-width=".5"/><path d="M963.5 124.3V231.5" stroke="#e6e6e6" stroke-width=".5"/><path d="M982.0 124.3V231.5" stroke="#e6e6e6" stroke-width=".5"/><path d="M1000.6 124.3V231.5" stroke="#e6e6e6" stroke-width=".5"/><path d="M861.3 124.3V231.5" stroke="#ececec" stroke-width=".5"/><path d="M879.9 124.3V231.5" stroke="#ececec" stroke-width=".5"/><path d="M898.4 124.3V231.5" stroke="#ececec" stroke-width=".5"/><path d="M917.0 124.3V231.5" stroke="#ececec" stroke-width=".5"/><path d="M935.6 124.3V231.5" stroke="#ececec" stroke-width=".5"/><path d="M954.2 124.3V231.5" stroke="#ececec" stroke-width=".5"/><path d="M972.7 124.3V231.5" stroke="#ececec" stroke-width=".5"/><path d="M991.3 124.3V231.5" stroke="#ececec" stroke-width=".5"/><path d="M852.0 231.5H1016" stroke="#e6e6e6" stroke-width=".5"/><path d="M852.0 216.2H1016" stroke="#e6e6e6" stroke-width=".5"/><path d="M852.0 200.9H1016" stroke="#e6e6e6" stroke-width=".5"/><path d="M852.0 185.5H1016" stroke="#e6e6e6" stroke-width=".5"/><path d="M852.0 170.2H1016" stroke="#e6e6e6" stroke-width=".5"/><path d="M852.0 154.9H1016" stroke="#e6e6e6" stroke-width=".5"/><path d="M852.0 139.6H1016" stroke="#e6e6e6" stroke-width=".5"/><path d="M852.0 124.3H1016" stroke="#e6e6e6" stroke-width=".5"/><path d="M1016 124.3V231.5" stroke="#e6e6e6" stroke-width=".5"/><path d="M852.0 208.5L852.9 207.6L853.9 206.7L854.8 205.8L855.7 204.9L856.6 204.0L857.6 203.1L858.5 202.2L859.4 201.2L860.4 201.2L861.3 201.2L862.2 201.2L863.1 201.2L864.1 201.2L865.0 201.2L865.9 201.2L866.9 201.2L867.8 201.2L868.7 201.2L869.6 201.2L870.6 201.2L871.5 201.2L872.4 201.2L873.4 201.2L874.3 201.2L875.2 202.5L876.1 203.6L877.1 204.6L878.0 205.6L878.9 206.5L879.9 207.3L880.8 208.1L881.7 208.8L882.6 209.5L883.6 210.1L884.5 210.8L885.4 211.3L886.4 211.9L887.3 212.4L888.2 212.9L889.1 213.3L890.1 213.8L891.0 214.2L891.9 214.6L892.9 215.0L893.8 215.4L894.7 215.7L895.7 216.0L896.6 216.4L897.5 216.7L898.4 217.0L899.4 217.3L900.3 217.5L901.2 217.8L902.2 218.1L903.1 218.3L904.0 218.5L904.9 218.8L905.9 219.0L906.8 219.2L907.7 219.4L908.7 219.6L909.6 219.8L910.5 220.0L911.4 220.2L912.4 220.3L913.3 220.5L914.2 220.7L915.2 220.8L916.1 221.0L917.0 221.1L917.9 221.3L918.9 221.4L919.8 221.6L920.7 221.7L921.7 221.8L922.6 221.9L923.5 222.1L924.4 222.2L925.4 222.3L926.3 222.4L927.2 222.5L928.2 222.6L929.1 222.8L930.0 222.9L930.9 223.0L931.9 223.1L932.8 223.2L933.7 223.2L934.7 223.3L935.6 223.4L936.5 223.5L937.4 223.6L938.4 223.7L939.3 223.8L940.2 223.9L941.2 223.9L942.1 224.0L943.0 224.1L943.9 224.2L944.9 224.2L945.8 224.4L946.7 224.5L947.7 224.7L948.6 224.8L949.5 224.9L950.4 225.0L951.4 225.2L952.3 225.3L953.2 225.4L954.2 225.5L955.1 225.6L956.0 225.7L956.9 225.8L957.9 225.9L958.8 226.0L959.7 226.0L960.7 226.0L961.6 226.0L962.5 226.0L963.5 226.0L964.4 226.0L965.3 226.0L966.2 226.0L967.2 226.0L968.1 226.0L969.0 226.0L970.0 226.0L970.9 226.0L971.8 226.0L972.7 226.0L973.7 226.0L974.6 226.0L975.5 226.0L976.5 226.0L977.4 226.0L978.3 226.0L979.2 226.0L980.2 226.0L981.1 226.0L982.0 226.0L983.0 226.0L983.9 226.0L984.8 226.0L985.7 226.0L986.7 226.0L987.6 226.0L988.5 226.0L989.5 226.0L990.4 226.0L991.3 226.0L992.2 226.0L993.2 226.0L994.1 226.0L995.0 226.0L996.0 226.0L996.9 226.0L997.8 226.0L998.7 226.0L999.7 226.0L1000.6 226.0L1000.6 231.5L852.0 231.5z" fill="#9fb4f4" fill-opacity=".6" stroke="none"/><path d="M852.0 190.9L852.9 189.9L853.9 189.0L854.8 189.0L855.7 189.0L856.6 189.0L857.6 189.0L858.5 194.8L859.4 199.2L860.4 202.6L861.3 205.3L862.2 207.6L863.1 209.5L864.1 211.1L865.0 212.5L865.9 213.7L866.9 214.8L867.8 215.7L868.7 216.5L869.6 217.3L870.6 218.0L871.5 218.6L872.4 219.1L873.4 219.6L874.3 220.1L875.2 220.5L876.1 220.9L877.1 221.3L878.0 221.7L878.9 222.0L879.9 222.3L880.8 222.6L881.7 222.8L882.6 223.1L883.6 223.3L884.5 223.5L885.4 223.8L886.4 223.9L887.3 224.1L888.2 224.3L889.1 224.5L890.1 224.7L891.0 224.8L891.9 225.0L892.9 225.1L893.8 225.2L894.7 225.4L895.7 225.5L896.6 225.6L897.5 225.7L898.4 225.8L899.4 225.9L900.3 226.0L901.2 226.1L902.2 226.2L903.1 226.3L904.0 226.4L904.9 226.5L905.9 226.5L906.8 226.5L907.7 226.5L908.7 226.5L909.6 226.5L910.5 226.5L911.4 226.5L912.4 226.5L913.3 226.5L914.2 226.5L915.2 226.5L916.1 226.5L917.0 226.5L917.9 226.5L918.9 226.5L919.8 226.5L920.7 226.5L921.7 226.5L922.6 226.5L923.5 226.5L924.4 226.5L925.4 226.5L926.3 226.5L927.2 226.5L928.2 226.5L929.1 226.5L930.0 226.5L930.9 226.5L931.9 226.5L932.8 226.5L933.7 226.5L934.7 226.5L935.6 226.5L936.5 226.5L937.4 226.5L938.4 226.5L939.3 226.5L940.2 226.5L941.2 226.5L942.1 226.5L943.0 226.5L943.9 226.5L944.9 226.5L945.8 226.5L946.7 226.5L947.7 226.5L948.6 226.5L949.5 226.5L950.4 226.5L951.4 226.5L952.3 226.5L953.2 226.5L954.2 226.5L955.1 226.5L956.0 226.5L956.9 226.5L957.9 226.5L958.8 226.5L959.7 226.5L960.7 226.5L961.6 226.5L962.5 226.5L963.5 226.5L964.4 226.5L965.3 226.5L966.2 226.5L967.2 226.5L968.1 226.5L969.0 226.5L970.0 226.5L970.9 226.5L971.8 226.5L972.7 226.5L973.7 226.5L974.6 226.5L975.5 226.5L976.5 226.5L977.4 226.5L978.3 226.5L979.2 226.5L980.2 226.5L981.1 226.5L982.0 226.5L983.0 226.5L983.9 226.5L984.8 226.5L985.7 226.5L986.7 226.5L987.6 226.5L988.5 226.5L989.5 226.5L990.4 226.5L991.3 226.5L992.2 226.5L993.2 226.5L994.1 226.5L995.0 226.5L996.0 226.5L996.9 226.5L997.8 226.5L998.7 226.5L999.7 226.5L1000.6 226.5L1000.6 231.5L852.0 231.5z" fill="#f0a0a8" fill-opacity=".6" stroke="none"/><path d="M852.0 208.5L852.9 207.6L853.9 206.7L854.8 205.8L855.7 204.9L856.6 204.0L857.6 203.1L858.5 202.2L859.4 201.2L860.4 201.2L861.3 201.2L862.2 201.2L863.1 201.2L864.1 201.2L865.0 201.2L865.9 201.2L866.9 201.2L867.8 201.2L868.7 201.2L869.6 201.2L870.6 201.2L871.5 201.2L872.4 201.2L873.4 201.2L874.3 201.2L875.2 202.5L876.1 203.6L877.1 204.6L878.0 205.6L878.9 206.5L879.9 207.3L880.8 208.1L881.7 208.8L882.6 209.5L883.6 210.1L884.5 210.8L885.4 211.3L886.4 211.9L887.3 212.4L888.2 212.9L889.1 213.3L890.1 213.8L891.0 214.2L891.9 214.6L892.9 215.0L893.8 215.4L894.7 215.7L895.7 216.0L896.6 216.4L897.5 216.7L898.4 217.0L899.4 217.3L900.3 217.5L901.2 217.8L902.2 218.1L903.1 218.3L904.0 218.5L904.9 218.8L905.9 219.0L906.8 219.2L907.7 219.4L908.7 219.6L909.6 219.8L910.5 220.0L911.4 220.2L912.4 220.3L913.3 220.5L914.2 220.7L915.2 220.8L916.1 221.0L917.0 221.1L917.9 221.3L918.9 221.4L919.8 221.6L920.7 221.7L921.7 221.8L922.6 221.9L923.5 222.1L924.4 222.2L925.4 222.3L926.3 222.4L927.2 222.5L928.2 222.6L929.1 222.8L930.0 222.9L930.9 223.0L931.9 223.1L932.8 223.2L933.7 223.2L934.7 223.3L935.6 223.4L936.5 223.5L937.4 223.6L938.4 223.7L939.3 223.8L940.2 223.9L941.2 223.9L942.1 224.0L943.0 224.1L943.9 224.2L944.9 224.2L945.8 224.4L946.7 224.5L947.7 224.7L948.6 224.8L949.5 224.9L950.4 225.0L951.4 225.2L952.3 225.3L953.2 225.4L954.2 225.5L955.1 225.6L956.0 225.7L956.9 225.8L957.9 225.9L958.8 226.0L959.7 226.0L960.7 226.0L961.6 226.0L962.5 226.0L963.5 226.0L964.4 226.0L965.3 226.0L966.2 226.0L967.2 226.0L968.1 226.0L969.0 226.0L970.0 226.0L970.9 226.0L971.8 226.0L972.7 226.0L973.7 226.0L974.6 226.0L975.5 226.0L976.5 226.0L977.4 226.0L978.3 226.0L979.2 226.0L980.2 226.0L981.1 226.0L982.0 226.0L983.0 226.0L983.9 226.0L984.8 226.0L985.7 226.0L986.7 226.0L987.6 226.0L988.5 226.0L989.5 226.0L990.4 226.0L991.3 226.0L992.2 226.0L993.2 226.0L994.1 226.0L995.0 226.0L996.0 226.0L996.9 226.0L997.8 226.0L998.7 226.0L999.7 226.0L1000.6 226.0" fill="none" stroke="#3c5cd0" stroke-width="1"/><path d="M852.0 190.9L852.9 189.9L853.9 189.0L854.8 189.0L855.7 189.0L856.6 189.0L857.6 189.0L858.5 194.8L859.4 199.2L860.4 202.6L861.3 205.3L862.2 207.6L863.1 209.5L864.1 211.1L865.0 212.5L865.9 213.7L866.9 214.8L867.8 215.7L868.7 216.5L869.6 217.3L870.6 218.0L871.5 218.6L872.4 219.1L873.4 219.6L874.3 220.1L875.2 220.5L876.1 220.9L877.1 221.3L878.0 221.7L878.9 222.0L879.9 222.3L880.8 222.6L881.7 222.8L882.6 223.1L883.6 223.3L884.5 223.5L885.4 223.8L886.4 223.9L887.3 224.1L888.2 224.3L889.1 224.5L890.1 224.7L891.0 224.8L891.9 225.0L892.9 225.1L893.8 225.2L894.7 225.4L895.7 225.5L896.6 225.6L897.5 225.7L898.4 225.8L899.4 225.9L900.3 226.0L901.2 226.1L902.2 226.2L903.1 226.3L904.0 226.4L904.9 226.5L905.9 226.5L906.8 226.5L907.7 226.5L908.7 226.5L909.6 226.5L910.5 226.5L911.4 226.5L912.4 226.5L913.3 226.5L914.2 226.5L915.2 226.5L916.1 226.5L917.0 226.5L917.9 226.5L918.9 226.5L919.8 226.5L920.7 226.5L921.7 226.5L922.6 226.5L923.5 226.5L924.4 226.5L925.4 226.5L926.3 226.5L927.2 226.5L928.2 226.5L929.1 226.5L930.0 226.5L930.9 226.5L931.9 226.5L932.8 226.5L933.7 226.5L934.7 226.5L935.6 226.5L936.5 226.5L937.4 226.5L938.4 226.5L939.3 226.5L940.2 226.5L941.2 226.5L942.1 226.5L943.0 226.5L943.9 226.5L944.9 226.5L945.8 226.5L946.7 226.5L947.7 226.5L948.6 226.5L949.5 226.5L950.4 226.5L951.4 226.5L952.3 226.5L953.2 226.5L954.2 226.5L955.1 226.5L956.0 226.5L956.9 226.5L957.9 226.5L958.8 226.5L959.7 226.5L960.7 226.5L961.6 226.5L962.5 226.5L963.5 226.5L964.4 226.5L965.3 226.5L966.2 226.5L967.2 226.5L968.1 226.5L969.0 226.5L970.0 226.5L970.9 226.5L971.8 226.5L972.7 226.5L973.7 226.5L974.6 226.5L975.5 226.5L976.5 226.5L977.4 226.5L978.3 226.5L979.2 226.5L980.2 226.5L981.1 226.5L982.0 226.5L983.0 226.5L983.9 226.5L984.8 226.5L985.7 226.5L986.7 226.5L987.6 226.5L988.5 226.5L989.5 226.5L990.4 226.5L991.3 226.5L992.2 226.5L993.2 226.5L994.1 226.5L995.0 226.5L996.0 226.5L996.9 226.5L997.8 226.5L998.7 226.5L999.7 226.5L1000.6 226.5" fill="none" stroke="#c85060" stroke-width="1"/><path d="M852.0 193.2L852.9 186.0L853.9 178.8L854.8 171.7L855.7 164.5L856.6 157.3L857.6 150.1L858.5 142.9L859.4 135.8L860.4 135.8L861.3 135.8L862.2 135.8L863.1 135.8L864.1 135.8L865.0 135.8L865.9 135.8L866.9 135.8L867.8 135.8L868.7 135.8L869.6 135.8L870.6 135.8L871.5 135.8L872.4 135.8L873.4 135.8L874.3 135.8L875.2 139.6L876.1 143.1L877.1 146.4L878.0 149.4L878.9 152.3L879.9 154.9L880.8 157.4L881.7 159.7L882.6 161.9L883.6 163.9L884.5 165.8L885.4 167.7L886.4 169.4L887.3 171.0L888.2 172.6L889.1 174.1L890.1 175.5L891.0 176.8L891.9 178.1L892.9 179.3L893.8 180.4L894.7 181.5L895.7 182.6L896.6 183.6L897.5 184.6L898.4 185.5L899.4 186.4L900.3 187.3L901.2 188.1L902.2 188.9L903.1 189.7L904.0 190.5L904.9 191.2L905.9 191.9L906.8 192.6L907.7 193.2L908.7 193.8L909.6 194.4L910.5 195.0L911.4 195.6L912.4 196.1L913.3 196.7L914.2 197.2L915.2 197.7L916.1 198.2L917.0 198.7L917.9 199.1L918.9 199.6L919.8 200.0L920.7 200.4L921.7 200.9L922.6 201.3L923.5 201.7L924.4 202.0L925.4 202.4L926.3 202.8L927.2 203.1L928.2 203.5L929.1 203.8L930.0 204.1L930.9 204.5L931.9 204.8L932.8 205.1L933.7 205.4L934.7 205.7L935.6 206.0L936.5 206.2L937.4 206.5L938.4 206.8L939.3 207.1L940.2 207.3L941.2 207.6L942.1 207.8L943.0 208.1L943.9 208.3L944.9 208.5L945.8 209.0L946.7 209.4L947.7 209.8L948.6 210.3L949.5 210.7L950.4 211.0L951.4 211.4L952.3 211.8L953.2 212.2L954.2 212.5L955.1 212.8L956.0 213.2L956.9 213.5L957.9 213.8L958.8 214.1L959.7 214.4L960.7 214.7L961.6 215.0L962.5 215.3L963.5 215.5L964.4 215.8L965.3 216.1L966.2 216.3L967.2 216.6L968.1 216.8L969.0 217.0L970.0 217.3L970.9 217.5L971.8 217.7L972.7 217.9L973.7 218.1L974.6 218.3L975.5 218.5L976.5 218.7L977.4 218.9L978.3 219.1L979.2 219.3L980.2 219.4L981.1 219.6L982.0 219.8L983.0 219.9L983.9 220.1L984.8 220.3L985.7 220.4L986.7 220.6L987.6 220.7L988.5 220.9L989.5 221.0L990.4 221.1L991.3 221.3L992.2 221.4L993.2 221.6L994.1 221.7L995.0 221.8L996.0 221.9L996.9 222.1L997.8 222.2L998.7 222.3L999.7 222.4L1000.6 222.5" fill="none" stroke="#56583a" stroke-width="1.200" stroke-dasharray="3 .5"/><path d="M852.0 124.3V231.5H1016" fill="none" stroke="#555" stroke-width=".8"/><path d="M850.0 231.5H852.0" stroke="#555" stroke-width=".5"/><path d="M850.8 223.8H852.0" stroke="#555" stroke-width=".5"/><path d="M850.0 216.2H852.0" stroke="#555" stroke-width=".5"/><path d="M850.8 208.5H852.0" stroke="#555" stroke-width=".5"/><path d="M850.0 200.9H852.0" stroke="#555" stroke-width=".5"/><path d="M850.8 193.2H852.0" stroke="#555" stroke-width=".5"/><path d="M850.0 185.5H852.0" stroke="#555" stroke-width=".5"/><path d="M850.8 177.9H852.0" stroke="#555" stroke-width=".5"/><path d="M850.0 170.2H852.0" stroke="#555" stroke-width=".5"/><path d="M850.8 162.6H852.0" stroke="#555" stroke-width=".5"/><path d="M850.0 154.9H852.0" stroke="#555" stroke-width=".5"/><path d="M850.8 147.2H852.0" stroke="#555" stroke-width=".5"/><path d="M850.0 139.6H852.0" stroke="#555" stroke-width=".5"/><path d="M850.8 131.9H852.0" stroke="#555" stroke-width=".5"/><path d="M850.0 124.3H852.0" stroke="#555" stroke-width=".5"/><path d="M852.0 231.5v2" stroke="#555" stroke-width=".5"/><path d="M870.6 231.5v2" stroke="#555" stroke-width=".5"/><path d="M889.1 231.5v2" stroke="#555" stroke-width=".5"/><path d="M907.7 231.5v2" stroke="#555" stroke-width=".5"/><path d="M926.3 231.5v2" stroke="#555" stroke-width=".5"/><path d="M944.9 231.5v2" stroke="#555" stroke-width=".5"/><path d="M963.5 231.5v2" stroke="#555" stroke-width=".5"/><path d="M982.0 231.5v2" stroke="#555" stroke-width=".5"/><path d="M1000.6 231.5v2" stroke="#555" stroke-width=".5"/><text x="848.5" y="233.5" font-size="5.900" text-anchor="end" fill="#333">0</text><text x="848.5" y="218.2" font-size="5.900" text-anchor="end" fill="#333">2</text><text x="848.5" y="202.9" font-size="5.900" text-anchor="end" fill="#333">4</text><text x="848.5" y="187.5" font-size="5.900" text-anchor="end" fill="#333">6</text><text x="848.5" y="172.2" font-size="5.900" text-anchor="end" fill="#333">8</text><text x="848.5" y="156.9" font-size="5.900" text-anchor="end" fill="#333">10</text><text x="848.5" y="141.6" font-size="5.900" text-anchor="end" fill="#333">12</text><text x="848.5" y="126.3" font-size="5.900" text-anchor="end" fill="#333">14</text><text x="852.0" y="241.0" font-size="5.900" text-anchor="middle" fill="#333">0</text><text x="870.6" y="241.0" font-size="5.900" text-anchor="middle" fill="#333">0.5</text><text x="889.1" y="241.0" font-size="5.900" text-anchor="middle" fill="#333">1</text><text x="907.7" y="241.0" font-size="5.900" text-anchor="middle" fill="#333">1.5</text><text x="926.3" y="241.0" font-size="5.900" text-anchor="middle" fill="#333">2</text><text x="944.9" y="241.0" font-size="5.900" text-anchor="middle" fill="#333">2.5</text><text x="963.5" y="241.0" font-size="5.900" text-anchor="middle" fill="#333">3</text><text x="982.0" y="241.0" font-size="5.900" text-anchor="middle" fill="#333">3.5</text><text x="1000.6" y="241.0" font-size="5.900" text-anchor="middle" fill="#333">4</text><text x="933.800" y="260" font-size="9.200" text-anchor="middle" fill="#333">T(sec)</text><text transform="translate(832.200 178) rotate(-90)" font-size="10" text-anchor="middle" fill="#222">Sd(m/s²)</text><rect x="927" y="121.500" width="92" height="38.500" fill="#fff" fill-opacity=".9" stroke="#ddd" stroke-width=".5"/><rect x="931" y="128" width="15.500" height="5" rx=".6" fill="#9fb4f4" stroke="#3c5cd0" stroke-width=".8"/><text x="949.500" y="133" font-size="5.900" fill="#333">Sd(T)x,y</text><rect x="931" y="138.500" width="15.500" height="5" rx=".6" fill="#f4b4b8" stroke="#c85060" stroke-width=".8"/><text x="949.500" y="143.500" font-size="5.900" fill="#333">Svd</text><path d="M931 151.500h15.500" stroke="#56583a" stroke-width="1.100" stroke-dasharray="2.600 .8"/><text x="949.500" y="153.500" font-size="5.900" fill="#333">Se(T)x,y - TR=475 χρόνια</text></svg><div class="a" style="left:814px;top:270.500px;width:210px;height:266.500px;background:#fff"></div><div class="a" style="left:814px;top:270.500px;width:210px;height:10px;background:#f3f3f3;border-bottom:.6px solid #ddd"></div><div class="a" style="left:896.500px;top:270.500px;width:.7px;height:10px;background:#ccc"></div><span class="t" style="left:817px;top:273px;font-size:6.200px;color:#666">Ιδιότητα</span><span class="t" style="left:900.500px;top:273px;font-size:6.200px;color:#666">Τιμή</span><span class="t" style="left:817.005px;top:283.0px;font-size:6.300px;color:#b4b4b4">Όνομα</span><span class="t" style="left:900.500px;top:283.0px;font-size:6.300px;color:#b4b4b4">Ευρωκώδικες</span><div class="a" style="left:816px;top:290.8px;width:197px;height:8.600px;background:#e9e9e9"></div><span class="t" style="left:818.500px;top:293.8px;font-size:4px;color:#999">◢</span><span class="t" style="left:825px;top:292.0px;font-size:6.800px;font-weight:bold;color:#333;letter-spacing:-.05px">Κατηγορία Πλαστιμότητας</span><span class="t" style="left:825.0px;top:301.2px;font-size:6.300px;color:#b4b4b4">Κατηγορία Πλαστιμότητ...</span><span class="t" style="left:900.500px;top:301.2px;font-size:6.300px;color:#b4b4b4">Κ.Π.Μ.</span><div class="a" style="left:816px;top:308.9px;width:197px;height:8.600px;background:#e9e9e9"></div><span class="t" style="left:818.500px;top:311.9px;font-size:4px;color:#999">◢</span><span class="t" style="left:825px;top:310.1px;font-size:6.800px;font-weight:bold;color:#333;letter-spacing:-.05px">Είδος Φάσματος</span><span class="t" style="left:825.0px;top:319.3px;font-size:6.300px;color:#b4b4b4">Είδος Φάσματος</span><span class="t" style="left:900.500px;top:319.3px;font-size:6.300px;color:#b4b4b4">Σχεδιασμού</span><span class="t" style="left:831.5px;top:328.4px;font-size:6.300px;color:#b4b4b4">kw=</span><span class="t" style="left:900.500px;top:328.4px;font-size:6.300px;color:#b4b4b4">1.00</span><span class="t" style="left:831.5px;top:337.5px;font-size:6.300px;color:#b4b4b4">q0=</span><span class="t" style="left:900.500px;top:337.5px;font-size:6.300px;color:#b4b4b4">2.65</span><span class="t" style="left:831.5px;top:346.6px;font-size:6.300px;color:#b4b4b4">α=</span><span class="t" style="left:900.500px;top:346.6px;font-size:6.300px;color:#b4b4b4">2.65</span><span class="t" style="left:831.5px;top:355.6px;font-size:6.300px;color:#b4b4b4">qy=</span><span class="t" style="left:900.500px;top:355.6px;font-size:6.300px;color:#b4b4b4">1.50</span><span class="t" style="left:825.0px;top:364.7px;font-size:6.300px;color:#b4b4b4">Τύπος Φάσματος</span><span class="t" style="left:900.500px;top:364.7px;font-size:6.300px;color:#b4b4b4">Τύπος 1</span><span class="t" style="left:825.0px;top:373.8px;font-size:6.300px;color:#b4b4b4">Ανάλυση για Κατακόρυ...</span><span class="t" style="left:900.500px;top:373.8px;font-size:6.300px;color:#b4b4b4">ΟΧΙ</span><div class="a" style="left:816px;top:381.6px;width:197px;height:8.600px;background:#e9e9e9"></div><span class="t" style="left:818.500px;top:384.6px;font-size:4px;color:#999">◢</span><span class="t" style="left:825px;top:382.8px;font-size:6.800px;font-weight:bold;color:#333;letter-spacing:-.05px">Σπουδαιότητα</span><span class="t" style="left:825.0px;top:392.0px;font-size:6.300px;color:#b4b4b4">Κατηγορία Σπουδαιότητ...</span><span class="t" style="left:900.500px;top:392.0px;font-size:6.300px;color:#b4b4b4">III</span><span class="t" style="left:831.5px;top:401.0px;font-size:6.300px;color:#b4b4b4">γI=</span><span class="t" style="left:900.500px;top:401.0px;font-size:6.300px;color:#b4b4b4">1.2</span><span class="t" style="left:831.5px;top:410.1px;font-size:6.300px;color:#b4b4b4">ε=</span><span class="t" style="left:900.500px;top:410.1px;font-size:6.300px;color:#b4b4b4">0.4</span><div class="a" style="left:816px;top:417.9px;width:197px;height:8.600px;background:#e9e9e9"></div><span class="t" style="left:818.500px;top:420.9px;font-size:4px;color:#999">◢</span><span class="t" style="left:825px;top:419.1px;font-size:6.800px;font-weight:bold;color:#333;letter-spacing:-.05px">Δευτερεύοντα Στοιχεία</span><span class="t" style="left:825.0px;top:428.3px;font-size:6.300px;color:#555">Ποσοστό δυσκαμψίας δ...</span><span class="t" style="left:900.500px;top:428.3px;font-size:6.300px;color:#555">15% - ΕΚ8</span><div class="a" style="left:816px;top:436.1px;width:197px;height:8.600px;background:#e9e9e9"></div><span class="t" style="left:818.500px;top:439.1px;font-size:4px;color:#999">◢</span><span class="t" style="left:825px;top:437.3px;font-size:6.800px;font-weight:bold;color:#333;letter-spacing:-.05px">μη-Φέροντα Στοιχεία-Περιορισμός Βλαβών</span><span class="t" style="left:825.0px;top:446.4px;font-size:6.300px;color:#b4b4b4">Είδος μη-Φερόντων Στοι...</span><span class="t" style="left:900.500px;top:446.4px;font-size:6.300px;color:#b4b4b4">Κτήρια με μη φέροντα στοιχεία από ψα...</span><span class="t" style="left:831.5px;top:455.5px;font-size:6.300px;color:#b4b4b4">α=</span><span class="t" style="left:900.500px;top:455.5px;font-size:6.300px;color:#b4b4b4">0.005</span><span class="t" style="left:825.0px;top:464.6px;font-size:6.300px;color:#b4b4b4">Στάθμη dr =</span><span class="t" style="left:900.500px;top:464.6px;font-size:6.300px;color:#b4b4b4">1.5 % Hορ</span><div class="a" style="left:816px;top:472.4px;width:197px;height:8.600px;background:#e9e9e9"></div><span class="t" style="left:818.500px;top:475.4px;font-size:4px;color:#999">◢</span><span class="t" style="left:825px;top:473.6px;font-size:6.800px;font-weight:bold;color:#333;letter-spacing:-.05px">Σεισμική Επιτάχυνση Εδάφους</span><span class="t" style="left:825.0px;top:482.8px;font-size:6.300px;color:#b4b4b4">Σεισμική Ζώνη</span><span class="t" style="left:900.500px;top:482.8px;font-size:6.300px;color:#b4b4b4">Ζ3</span><span class="t" style="left:831.5px;top:491.8px;font-size:6.300px;color:#b4b4b4">ag·R/g-EC8 1=</span><span class="t" style="left:900.500px;top:491.8px;font-size:6.300px;color:#b4b4b4">0.36</span><span class="t" style="left:831.5px;top:500.9px;font-size:6.300px;color:#b4b4b4">ag·R/g=</span><span class="t" style="left:900.500px;top:500.9px;font-size:6.300px;color:#b4b4b4">0.31</span><span class="t" style="left:831.5px;top:510.0px;font-size:6.300px;color:#b4b4b4">ag=</span><span class="t" style="left:900.500px;top:510.0px;font-size:6.300px;color:#b4b4b4">3.64932 m/s²</span><div class="a" style="left:816px;top:517.8px;width:197px;height:8.600px;background:#e9e9e9"></div><span class="t" style="left:818.500px;top:520.8px;font-size:4px;color:#999">◢</span><span class="t" style="left:825px;top:519.0px;font-size:6.800px;font-weight:bold;color:#333;letter-spacing:-.05px">Χαρακτηριστικές Περίοδοι</span><span class="t" style="left:825.0px;top:528.2px;font-size:6.300px;color:#b4b4b4">Εδαφικός Τύπος</span><span class="t" style="left:900.500px;top:528.2px;font-size:6.300px;color:#b4b4b4">C</span><div class="a" style="left:1021.500px;top:283px;width:1.500px;height:105px;background:#c4c4c4"></div><div class="a" style="left:811px;top:568.500px;width:213px;height:3.500px;background:#dadada"></div><div class="a" style="left:903px;top:569.500px;width:31px;height:0;border-top:1.200px dotted #999"></div><div class="a" style="left:900px;top:573px;width:13px;height:15px;background:#dcdcdc"></div><svg class="a" style="left:0;top:0" width="1024" height="600" viewBox="0 0 1024 600"><g transform="translate(846.0 576)"><rect x="4.200" y="1" width="1.600" height="6.500" fill="#e8cc30"/><circle cx="5" cy="0.800" r="1" fill="#d8b820"/><path d="M3 8.500h4" stroke="#d8c040" stroke-width="1.200"/></g><g transform="translate(859.6 576)"><path d="M1 2.500l4-1.500 4 1.500-4 1.500zM1 5l4 1.500 4-1.500M1 7.500l4 1.500 4-1.500" fill="#666" stroke="#555" stroke-width="1"/></g><g transform="translate(873.6 576)"><path d="M1.500 1h4l3 2.500v5.500h-7z" fill="#e4f0dc" stroke="#5a8a3a" stroke-width=".9"/><path d="M4.500 1v4h4" fill="none" stroke="#5a8a3a" stroke-width=".9"/></g><g transform="translate(887.0 576)"><rect x="1.200" y="1.200" width="7.600" height="7.600" fill="#f6f0ee" stroke="#b04a3a" stroke-width=".9"/><rect x="4" y="3" width="3.600" height="4" fill="#4a9a4a"/></g><g transform="translate(901.0 576)"><rect x="1" y="1.500" width="8" height="7" fill="#555"/><path d="M2 3.500h3M2 5.500h2M6 4h2.500M5.500 6.500h3" stroke="#ddd" stroke-width=".9"/></g><g transform="translate(915.0 576)"><rect x="1" y="2" width="3" height="7" fill="#4a9a3a"/><rect x="4.500" y="4" width="4.500" height="5" fill="#d84030"/><path d="M1 1.500l3 1 2.500-1" stroke="#c33" stroke-width=".7" fill="none"/></g><g transform="translate(929.0 576)"><circle cx="5.500" cy="2.600" r="1.900" fill="#b05a18"/><path d="M1.500 9c0-3 2-4.200 4-4.200s3.500 1.200 3.500 4.200z" fill="#d07820"/><rect x="1" y="8" width="8" height="1.200" fill="#444"/></g><g transform="translate(943.0 576)"><rect x="1" y="1" width="4" height="4" fill="#3a6ac8"/><rect x="5" y="2" width="4" height="4" fill="#48a048"/><rect x="2" y="5" width="3.500" height="4" fill="#d8a030"/><rect x="5.500" y="6" width="3.500" height="3" fill="#d04040"/></g><g transform="translate(957.0 576)"><path d="M2.500 1h3.500l2 2v6h-5.500z" fill="#e8ecf2" stroke="#8a98b0" stroke-width=".8"/><rect x="1.500" y="5" width="3" height="4" fill="#8a98b0"/></g><g transform="translate(970.0 576)"><rect x="1.800" y="1" width="6.500" height="8" rx=".8" fill="#fff" stroke="#c05a48" stroke-width="1"/></g><g transform="translate(984.5 576)"><rect x="1" y="1" width="8" height="8" rx=".6" fill="#555"/><rect x="2.500" y="1" width="5" height="3" fill="#ddd"/><rect x="5.500" y="5.500" width="2.500" height="3.500" fill="#ccc"/></g><g transform="translate(998.5 576)"><circle cx="5" cy="5" r="3.100" fill="none" stroke="#e03030" stroke-width="2.200"/><path d="M5 1.900a3.100 3.100 0 0 1 2.700 4.650" fill="none" stroke="#f0a020" stroke-width="2.200"/><path d="M7.700 6.550a3.100 3.100 0 0 1-5.400 0" fill="none" stroke="#30a040" stroke-width="2.200"/><path d="M2.300 6.550a3.100 3.100 0 0 1 0-3.100" fill="none" stroke="#3060e0" stroke-width="2.200"/><path d="M2.300 3.450a3.100 3.100 0 0 1 2.700-1.550" fill="none" stroke="#a030c0" stroke-width="2.200"/></g></svg><span class="t" style="left:1016px;top:577px;font-size:3.600px;color:#777;line-height:3.400px">▴<br>▾</span><div class="a" style="left:0;top:591px;width:1024px;height:9px;background:#f0f0f0"></div><span class="t" style="left:2.500px;top:592.500px;font-size:6.600px;color:#555">www.tol.com.gr</span><svg class="a" style="left:243px;top:591.500px" width="24" height="8" viewBox="0 0 24 8"><rect x=".4" y=".4" width="7" height="7" fill="#dfe8f6" stroke="#8aa4c8" stroke-width=".6"/><rect x=".4" y=".4" width="7" height="1.800" fill="#5b86c8"/><path d="M10 3.500l1.200 1.500 1.200-1.500z" fill="#666"/><rect x="16" y="1.500" width="7.500" height="5.500" fill="#cfdcf0" stroke="#6b8cc0" stroke-width=".6"/><path d="M17 3.500h5.500M17 5.200h5.500" stroke="#6b8cc0" stroke-width=".6"/></svg><span class="t" style="left:276px;top:592.500px;font-size:6.500px;color:#444;letter-spacing:-.12px">ΕΥΡΩΚΩΔ/ΚΕΣ | Ιδιομορφική | Κ.Π.Μ. | q=2.65 | Σχεδιασμού | Τύπος 1</span><span class="t" style="left:519px;top:592.500px;font-size:6.500px;color:#444">Νέο Έργο</span><span class="t" style="left:843.500px;top:592.500px;font-size:6.800px;color:#444">κάναβος</span><span class="t" style="left:875.500px;top:594px;font-size:4.500px;color:#666">▾</span><span class="t" style="left:882px;top:592.500px;font-size:6.800px;color:#444">έλξη</span><div class="a" style="left:896px;top:591px;width:12px;height:9px;border:.8px solid #3a6fb8;background:#dde6f4"></div><span class="t" style="left:897.500px;top:592.500px;font-size:6.500px;color:#333;font-weight:bold">dxf</span><span class="t" style="left:910.500px;top:592.500px;font-size:6.800px;color:#444">έλξη</span><div class="a" style="left:926.500px;top:591px;width:24px;height:9px;border:.8px solid #3a6fb8;background:#c9d8ef"></div><span class="t" style="left:928px;top:592.500px;font-size:6.500px;color:#223">κάθετα</span><span class="t" style="left:956px;top:592px;font-size:7px;color:#555">−</span><div class="a" style="left:966px;top:595.500px;width:45px;height:.8px;background:#aaa"></div><div class="a" style="left:988px;top:591.500px;width:2px;height:8px;background:#444"></div><span class="t" style="left:1012px;top:592px;font-size:7px;color:#555">+</span></body></html>
